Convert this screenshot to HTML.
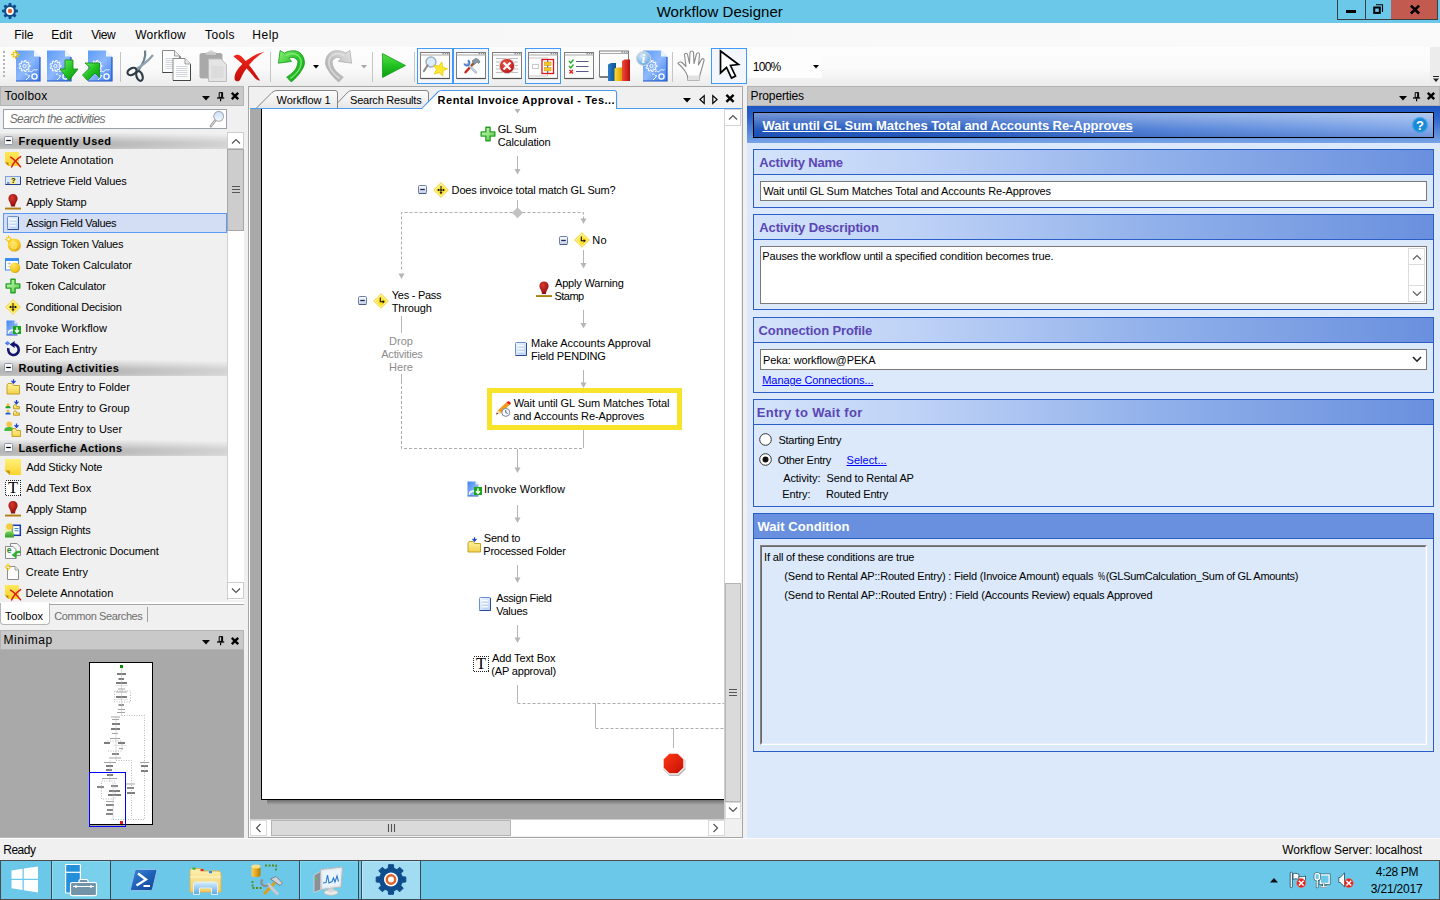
<!DOCTYPE html>
<html lang="en"><head><meta charset="utf-8"><title>Workflow Designer</title><style>
html,body{margin:0;padding:0;}
body{width:1440px;height:900px;overflow:hidden;position:relative;background:#f0f0f0;font-family:"Liberation Sans",sans-serif;font-size:11px;color:#000;}
div,span.t,svg{position:absolute;box-sizing:border-box;}
span.t{white-space:pre;}
svg{overflow:visible;}
</style></head><body>
<div style="left:0px;top:0px;width:1440px;height:23px;background:#6bc8e9;"></div>
<span class="t" style="left:656.70px;top:1.80px;font-size:15px;line-height:20px;letter-spacing:0.030px;">Workflow Designer</span>
<svg style="left:2px;top:3px;" width="16" height="16" viewBox="0 0 16 16"><polygon points="15.90,6.73 15.90,9.27 13.80,9.54 13.21,10.98 14.49,12.68 12.68,14.49 11.01,13.19 9.57,13.79 9.27,15.90 6.73,15.90 6.46,13.80 5.02,13.21 3.32,14.49 1.51,12.68 2.81,11.01 2.21,9.57 0.10,9.27 0.10,6.73 2.20,6.46 2.79,5.02 1.51,3.32 3.32,1.51 4.99,2.81 6.43,2.21 6.73,0.10 9.27,0.10 9.54,2.20 10.98,2.79 12.68,1.51 14.49,3.32 13.19,4.99 13.79,6.43" fill="#0e4c8c"/><circle cx="8" cy="8" r="3.9" fill="#fff"/><circle cx="8" cy="8" r="2.2" fill="#e0632a"/></svg>
<div style="left:1337px;top:0px;width:29px;height:20px;background:#6bc8e9;border:1px solid #3a3f42;border-top:none;"></div>
<div style="left:1365px;top:0px;width:27px;height:20px;background:#6bc8e9;border:1px solid #3a3f42;border-top:none;border-right:none;"></div>
<div style="left:1391px;top:0px;width:47px;height:20px;background:#c35a50;border-bottom:1px solid #3a3f42;border-right:1px solid #3a3f42;"></div>
<div style="left:1346px;top:10px;width:10px;height:3px;background:#000;"></div>
<svg style="left:1372px;top:3px;" width="12" height="12" viewBox="0 0 12 12"><path d="M4 1.700H10.500V9" fill="none" stroke="#000" stroke-width="1.100"/><rect x="2.200" y="4.500" width="5.600" height="5.400" fill="none" stroke="#000" stroke-width="2"/></svg>
<svg style="left:1409.5px;top:4.5px;" width="10" height="9" viewBox="0 0 10 9"><path d="M0.900 0.600L9.100 8.500M9.100 0.600L0.900 8.500" stroke="#000" stroke-width="2.600"/></svg>
<div style="left:0px;top:23px;width:1440px;height:24px;background:linear-gradient(90deg,#f5f5f5 0%,#f7f7f7 20%,#fafafa 100%);"></div>
<span class="t" style="left:14.35px;top:26.84px;font-size:12px;line-height:16px;letter-spacing:-0.054px;">File</span>
<span class="t" style="left:51.35px;top:26.84px;font-size:12px;line-height:16px;letter-spacing:0.019px;">Edit</span>
<span class="t" style="left:91.25px;top:26.84px;font-size:12px;line-height:16px;letter-spacing:-0.426px;">View</span>
<span class="t" style="left:135.25px;top:26.84px;font-size:12px;line-height:16px;letter-spacing:0.200px;">Workflow</span>
<span class="t" style="left:205.05px;top:26.84px;font-size:12px;line-height:16px;letter-spacing:0.384px;">Tools</span>
<span class="t" style="left:252.35px;top:26.84px;font-size:12px;line-height:16px;letter-spacing:0.481px;">Help</span>
<div style="left:0px;top:47px;width:1440px;height:39px;background:linear-gradient(#fdfdfd 0%,#fafafa 55%,#ececec 100%);"></div>
<div style="left:1430px;top:47px;width:10px;height:39px;background:#ececec;"></div>
<svg style="left:1433px;top:76px;" width="6" height="7" viewBox="0 0 6 7"><path d="M0 0.5H6" stroke="#222" stroke-width="1"/><path d="M0 2.5H6L3 6Z" fill="#222"/></svg>
<div style="left:0px;top:86px;width:244px;height:20px;background:#c9c9c9;border:1px solid #b4b4b4;"></div>
<span class="t" style="left:4.45px;top:87.84px;font-size:12px;line-height:16px;letter-spacing:0.248px;">Toolbox</span>
<svg style="left:202.2px;top:95.5px;" width="8" height="5" viewBox="0 0 8 5"><path d="M0 0H8L4 4.5Z" fill="#000"/></svg>
<svg style="left:216.79999999999998px;top:91.6px;" width="8" height="10" viewBox="0 0 8 10"><path d="M2.200 0.600H5.600V5.400H2.200Z" fill="none" stroke="#000" stroke-width="1"/><path d="M4.900 0.600V5.400" stroke="#000" stroke-width="1.500"/><path d="M0 6H7.200" stroke="#000" stroke-width="1.300"/><path d="M3.600 6.500V9.300" stroke="#000" stroke-width="1.200"/></svg>
<svg style="left:231.0px;top:92.0px;" width="8" height="8" viewBox="0 0 8 8"><path d="M0.800 0.800L7.200 7.200M7.200 0.800L0.800 7.200" stroke="#000" stroke-width="2.400"/></svg>
<div style="left:747px;top:86px;width:693px;height:20px;background:#c9c9c9;border:1px solid #b4b4b4;"></div>
<span class="t" style="left:750.55px;top:87.84px;font-size:12px;line-height:16px;letter-spacing:-0.127px;">Properties</span>
<svg style="left:1398.5px;top:95.5px;" width="8" height="5" viewBox="0 0 8 5"><path d="M0 0H8L4 4.5Z" fill="#000"/></svg>
<svg style="left:1413.1000000000001px;top:91.6px;" width="8" height="10" viewBox="0 0 8 10"><path d="M2.200 0.600H5.600V5.400H2.200Z" fill="none" stroke="#000" stroke-width="1"/><path d="M4.900 0.600V5.400" stroke="#000" stroke-width="1.500"/><path d="M0 6H7.200" stroke="#000" stroke-width="1.300"/><path d="M3.600 6.500V9.300" stroke="#000" stroke-width="1.200"/></svg>
<svg style="left:1427.3px;top:92.0px;" width="8" height="8" viewBox="0 0 8 8"><path d="M0.800 0.800L7.200 7.200M7.200 0.800L0.800 7.200" stroke="#000" stroke-width="2.400"/></svg>
<div style="left:0px;top:630px;width:244px;height:20px;background:#c9c9c9;border:1px solid #b4b4b4;"></div>
<span class="t" style="left:3.55px;top:632.14px;font-size:12px;line-height:16px;letter-spacing:0.546px;">Minimap</span>
<svg style="left:202.2px;top:640px;" width="8" height="5" viewBox="0 0 8 5"><path d="M0 0H8L4 4.5Z" fill="#000"/></svg>
<svg style="left:216.79999999999998px;top:636.1px;" width="8" height="10" viewBox="0 0 8 10"><path d="M2.200 0.600H5.600V5.400H2.200Z" fill="none" stroke="#000" stroke-width="1"/><path d="M4.900 0.600V5.400" stroke="#000" stroke-width="1.500"/><path d="M0 6H7.200" stroke="#000" stroke-width="1.300"/><path d="M3.600 6.500V9.300" stroke="#000" stroke-width="1.200"/></svg>
<svg style="left:231.0px;top:636.5px;" width="8" height="8" viewBox="0 0 8 8"><path d="M0.800 0.800L7.200 7.200M7.200 0.800L0.800 7.200" stroke="#000" stroke-width="2.400"/></svg>
<div style="left:0px;top:838px;width:1440px;height:22px;background:#f0f0f0;border-top:1px solid #fcfcfc;"></div>
<span class="t" style="left:3.35px;top:842.24px;font-size:12px;line-height:16px;letter-spacing:-0.534px;">Ready</span>
<span class="t" style="left:1282.35px;top:842.24px;font-size:12px;line-height:16px;letter-spacing:-0.084px;">Workflow Server: localhost</span>
<div style="left:3px;top:51px;width:2px;height:2px;background:#b5b5b5;"></div>
<div style="left:3px;top:55px;width:2px;height:2px;background:#b5b5b5;"></div>
<div style="left:3px;top:59px;width:2px;height:2px;background:#b5b5b5;"></div>
<div style="left:3px;top:63px;width:2px;height:2px;background:#b5b5b5;"></div>
<div style="left:3px;top:67px;width:2px;height:2px;background:#b5b5b5;"></div>
<div style="left:3px;top:71px;width:2px;height:2px;background:#b5b5b5;"></div>
<div style="left:3px;top:75px;width:2px;height:2px;background:#b5b5b5;"></div>
<svg style="left:11px;top:49.5px;" width="32" height="32" viewBox="0 0 32 32"><defs><linearGradient id="wfd1" x1="0" y1="0" x2="1" y2="1"><stop offset="0" stop-color="#5b9bf8"/><stop offset="0.5" stop-color="#8db8fb"/><stop offset="1" stop-color="#3f7fee"/></linearGradient></defs><path d="M5 0.500H23L29 6.5V31H5Z" fill="url(#wfd1)"/><path d="M23 0.500V6.500H29Z" fill="#eef4ff"/><path d="M5 31H29V7" stroke="#1f55c8" stroke-width="1.2" fill="none"/><path d="M19.06 15.32L19.06 16.68L17.41 16.83L17.03 17.88L18.20 19.05L17.32 20.10L15.96 19.15L15.00 19.71L15.14 21.36L13.79 21.59L13.36 20.00L12.26 19.80L11.31 21.15L10.13 20.47L10.82 18.97L10.11 18.12L8.51 18.54L8.04 17.26L9.54 16.56L9.54 15.44L8.04 14.74L8.51 13.46L10.11 13.88L10.82 13.03L10.13 11.53L11.31 10.85L12.26 12.20L13.36 12.00L13.79 10.41L15.14 10.64L15.00 12.29L15.96 12.85L17.32 11.90L18.20 12.95L17.03 14.12L17.41 15.17Z" fill="none" stroke="#fff" stroke-width="1"/><circle cx="13.5" cy="16" r="1.6" fill="none" stroke="#fff" stroke-width="0.9"/><path d="M17 22C19 19 20 24 22 20.5C23.5 18 25 22 26.5 19" stroke="#fff" stroke-width="1" fill="none"/><path d="M14 24.500C16 22.5 17 27 18.5 25.500C18 28 16 28.5 15 30" stroke="#fff" stroke-width="1" fill="none"/><circle cx="23.5" cy="26.5" r="2.6" fill="none" stroke="#fff" stroke-width="1.3"/><path d="M6.00 4.50L9.00 4.50M5.56 5.56L7.20 7.20M4.50 6.00L4.50 9.00M3.44 5.56L1.80 7.20M3.00 4.50L0.00 4.50M3.44 3.44L1.80 1.80M4.50 3.00L4.50 0.00M5.56 3.44L7.20 1.80" stroke="#f2c200" stroke-width="1.3" fill="none"/><circle cx="4.5" cy="4.5" r="1.3" fill="#fff6b0"/></svg>
<svg style="left:46px;top:49.5px;" width="32" height="32" viewBox="0 0 32 32"><defs><linearGradient id="wfd2" x1="0" y1="0" x2="1" y2="1"><stop offset="0" stop-color="#5b9bf8"/><stop offset="0.5" stop-color="#8db8fb"/><stop offset="1" stop-color="#3f7fee"/></linearGradient></defs><path d="M1 0.500H19L25 6.5V31H1Z" fill="url(#wfd2)"/><path d="M19 0.500V6.500H25Z" fill="#eef4ff"/><path d="M1 31H25V7" stroke="#1f55c8" stroke-width="1.2" fill="none"/><path d="M15.06 15.32L15.06 16.68L13.41 16.83L13.03 17.88L14.20 19.05L13.32 20.10L11.96 19.15L11.00 19.71L11.14 21.36L9.79 21.59L9.36 20.00L8.26 19.80L7.31 21.15L6.13 20.47L6.82 18.97L6.11 18.12L4.51 18.54L4.04 17.26L5.54 16.56L5.54 15.44L4.04 14.74L4.51 13.46L6.11 13.88L6.82 13.03L6.13 11.53L7.31 10.85L8.26 12.20L9.36 12.00L9.79 10.41L11.14 10.64L11.00 12.29L11.96 12.85L13.32 11.90L14.20 12.95L13.03 14.12L13.41 15.17Z" fill="none" stroke="#fff" stroke-width="1"/><circle cx="9.5" cy="16" r="1.6" fill="none" stroke="#fff" stroke-width="0.9"/><path d="M13 22C15 19 16 24 18 20.5C19.5 18 21 22 22.5 19" stroke="#fff" stroke-width="1" fill="none"/><path d="M10 24.500C12 22.5 13 27 14.5 25.500C14 28 12 28.5 11 30" stroke="#fff" stroke-width="1" fill="none"/><circle cx="19.5" cy="26.5" r="2.6" fill="none" stroke="#fff" stroke-width="1.3"/><defs><linearGradient id="grn1" x1="0" y1="0" x2="1" y2="1"><stop offset="0" stop-color="#7df06a"/><stop offset="0.5" stop-color="#22c322"/><stop offset="1" stop-color="#0a8f10"/></linearGradient></defs><path d="M19 10H27V19H32L23 30.500L14 19H19Z" fill="url(#grn1)" stroke="#0f8a12" stroke-width="0.8" stroke-linejoin="round"/></svg>
<svg style="left:82px;top:49.5px;" width="32" height="32" viewBox="0 0 32 32"><defs><linearGradient id="wfd3" x1="0" y1="0" x2="1" y2="1"><stop offset="0" stop-color="#5b9bf8"/><stop offset="0.5" stop-color="#8db8fb"/><stop offset="1" stop-color="#3f7fee"/></linearGradient></defs><path d="M6 0.500H24L30 6.5V31H6Z" fill="url(#wfd3)"/><path d="M24 0.500V6.500H30Z" fill="#eef4ff"/><path d="M6 31H30V7" stroke="#1f55c8" stroke-width="1.2" fill="none"/><path d="M20.06 15.32L20.06 16.68L18.41 16.83L18.03 17.88L19.20 19.05L18.32 20.10L16.96 19.15L16.00 19.71L16.14 21.36L14.79 21.59L14.36 20.00L13.26 19.80L12.31 21.15L11.13 20.47L11.82 18.97L11.11 18.12L9.51 18.54L9.04 17.26L10.54 16.56L10.54 15.44L9.04 14.74L9.51 13.46L11.11 13.88L11.82 13.03L11.13 11.53L12.31 10.85L13.26 12.20L14.36 12.00L14.79 10.41L16.14 10.64L16.00 12.29L16.96 12.85L18.32 11.90L19.20 12.95L18.03 14.12L18.41 15.17Z" fill="none" stroke="#fff" stroke-width="1"/><circle cx="14.5" cy="16" r="1.6" fill="none" stroke="#fff" stroke-width="0.9"/><path d="M18 22C20 19 21 24 23 20.5C24.5 18 26 22 27.5 19" stroke="#fff" stroke-width="1" fill="none"/><path d="M15 24.500C17 22.5 18 27 19.5 25.500C19 28 17 28.5 16 30" stroke="#fff" stroke-width="1" fill="none"/><circle cx="24.5" cy="26.5" r="2.6" fill="none" stroke="#fff" stroke-width="1.3"/><defs><linearGradient id="grn" x1="0" y1="0" x2="1" y2="1"><stop offset="0" stop-color="#7df06a"/><stop offset="0.5" stop-color="#22c322"/><stop offset="1" stop-color="#0a8f10"/></linearGradient></defs><path d="M3 13H17.500V27.500L13 23L5.5 30.500L0.500 25L8 17.500Z" fill="url(#grn)" stroke="#0f8a12" stroke-width="0.8" stroke-linejoin="round"/></svg>
<div style="left:120px;top:52px;width:1px;height:30px;background:#c5c5c5;"></div>
<svg style="left:126px;top:50px;" width="28" height="32" viewBox="0 0 28 32"><path d="M19 0.500C20 6 17 14 12.5 20" stroke="#6d7f8d" stroke-width="2.2" fill="none"/><path d="M27 5C23 10 17 15 10.500 19" stroke="#8fa0ae" stroke-width="2.200" fill="none"/><ellipse cx="6" cy="21.5" rx="4.800" ry="3.200" transform="rotate(-28 6 21.5)" fill="none" stroke="#2f3b45" stroke-width="2.2"/><ellipse cx="13.5" cy="26" rx="3" ry="5" transform="rotate(-18 13.5 26)" fill="none" stroke="#2f3b45" stroke-width="2.2"/></svg>
<svg style="left:162px;top:50px;" width="30" height="32" viewBox="0 0 30 32"><path d="M0.5 0.5H12.5L18.0 6.0V22.5H0.5Z" fill="#fcfcfc" stroke="#8a8a8a"/><path d="M12.5 0.5V6.0H18.0" fill="#e9e9e9" stroke="#8a8a8a" stroke-width="0.8"/><path d="M3.5 8.5H15.0" stroke="#c9ccd6" stroke-width="0.8"/><path d="M3.5 10.5H15.0" stroke="#c9ccd6" stroke-width="0.8"/><path d="M3.5 12.5H15.0" stroke="#c9ccd6" stroke-width="0.8"/><path d="M3.5 14.5H15.0" stroke="#c9ccd6" stroke-width="0.8"/><path d="M3.5 16.5H15.0" stroke="#c9ccd6" stroke-width="0.8"/><path d="M3.5 18.5H15.0" stroke="#c9ccd6" stroke-width="0.8"/><path d="M0.5 22.5H18.0V6.5" stroke="#444" stroke-width="1" fill="none"/><path d="M11 8.5H23L28.5 14.0V30.5H11Z" fill="#fcfcfc" stroke="#8a8a8a"/><path d="M23 8.5V14.0H28.5" fill="#e9e9e9" stroke="#8a8a8a" stroke-width="0.8"/><path d="M14 16.5H25.5" stroke="#c9ccd6" stroke-width="0.8"/><path d="M14 18.5H25.5" stroke="#c9ccd6" stroke-width="0.8"/><path d="M14 20.5H25.5" stroke="#c9ccd6" stroke-width="0.8"/><path d="M14 22.5H25.5" stroke="#c9ccd6" stroke-width="0.8"/><path d="M14 24.5H25.5" stroke="#c9ccd6" stroke-width="0.8"/><path d="M14 26.5H25.5" stroke="#c9ccd6" stroke-width="0.8"/><path d="M11 30.5H28.5V14.5" stroke="#444" stroke-width="1" fill="none"/></svg>
<svg style="left:199px;top:50px;" width="28" height="32" viewBox="0 0 28 32"><rect x="0.500" y="3" width="23" height="25.500" rx="2.5" fill="#a9a9a9"/><path d="M7 3L12 0L17 3Z" fill="#d5d5d5"/><rect x="7" y="2.5" width="10" height="2.500" fill="#c8c8c8"/><path d="M9.5 9H22L27.500 14.500V31.500H9.500Z" fill="#e4e4e4" stroke="#bdbdbd"/><path d="M12.500 17H24.500" stroke="#cfcfcf" stroke-width="0.8"/><path d="M12.500 19H24.500" stroke="#cfcfcf" stroke-width="0.8"/><path d="M12.500 21H24.500" stroke="#cfcfcf" stroke-width="0.8"/><path d="M12.500 23H24.500" stroke="#cfcfcf" stroke-width="0.8"/><path d="M12.500 25H24.500" stroke="#cfcfcf" stroke-width="0.8"/><path d="M12.500 27H24.500" stroke="#cfcfcf" stroke-width="0.8"/></svg>
<svg style="left:233px;top:51px;" width="32" height="31" viewBox="0 0 32 31"><defs><linearGradient id="rdx" x1="0" y1="0" x2="0" y2="1"><stop offset="0" stop-color="#f0281c"/><stop offset="1" stop-color="#c40d08"/></linearGradient></defs><path d="M0.500 5.500C2.500 3 6 3 8.500 5.500C14.500 11.500 21.500 20.500 27 29.500C25 29.800 23 28.500 21 26C15.500 19 8 11 0.500 5.500Z" fill="url(#rdx)"/><path d="M31.500 1C24 4.500 13.500 14.500 7.500 28C6.500 30.800 3 31 1.800 28.800C1 26 2 22.500 4 19.500C10 10 22 2.500 31.500 1Z" fill="url(#rdx)"/></svg>
<div style="left:270px;top:52px;width:1px;height:30px;background:#c5c5c5;"></div>
<svg style="left:277.5px;top:49.5px;" width="27" height="32" viewBox="0 0 27 32"><defs><linearGradient id="und" x1="0" y1="0" x2="1" y2="1"><stop offset="0" stop-color="#8af078"/><stop offset="0.5" stop-color="#2cc32c"/><stop offset="1" stop-color="#0e9a14"/></linearGradient></defs><path d="M2.1 0.500L0.400 13.2L13.600 11.400L10.800 8C13 7.200 15.500 7.200 16.700 8C19 9.500 20.300 11 19.800 12.800C19.500 15.500 18.500 17.500 17.400 19.400C15 22.500 12 24.800 8.700 27.100L13.250 31.900C17.500 28.500 21.500 24.500 23.700 20.100C25.800 17 26.800 14 26.400 11.400C26 8 24.500 5 22.300 3.100C20 1.200 17.500 0.700 15.300 0.700C12 0.700 9 1.500 6.300 3.100Z" fill="url(#und)" stroke="#159a18" stroke-width="0.8" stroke-linejoin="round"/><path d="M8 5.500C12 3.300 17 3.300 20 5.500C23.500 8.500 24 13 22 18C20 22 16.500 25.500 12.500 28.500" fill="none" stroke="#8af078" stroke-width="1.600" opacity="0.750"/></svg>
<svg style="left:312.5px;top:65px;" width="6" height="4" viewBox="0 0 6 4"><path d="M0 0H6L3 3.500Z" fill="#000"/></svg>
<svg style="left:325px;top:49.5px;" width="27" height="32" viewBox="0 0 27 32"><g transform="translate(27 0) scale(-1 1)"><defs><linearGradient id="red" x1="0" y1="0" x2="1" y2="1"><stop offset="0" stop-color="#e4e4e4"/><stop offset="0.5" stop-color="#c2c2c2"/><stop offset="1" stop-color="#a8a8a8"/></linearGradient></defs><path d="M2.1 0.500L0.400 13.2L13.600 11.400L10.800 8C13 7.200 15.500 7.200 16.700 8C19 9.500 20.300 11 19.800 12.800C19.500 15.500 18.500 17.500 17.400 19.400C15 22.500 12 24.800 8.700 27.100L13.250 31.900C17.500 28.500 21.500 24.500 23.700 20.100C25.800 17 26.800 14 26.400 11.400C26 8 24.500 5 22.300 3.100C20 1.200 17.500 0.700 15.300 0.700C12 0.700 9 1.500 6.300 3.100Z" fill="url(#red)" stroke="#b0b0b0" stroke-width="0.8" stroke-linejoin="round"/><path d="M8 5.500C12 3.300 17 3.300 20 5.500C23.500 8.500 24 13 22 18C20 22 16.500 25.500 12.500 28.500" fill="none" stroke="#e4e4e4" stroke-width="1.600" opacity="0.750"/></g></svg>
<svg style="left:360.5px;top:65px;" width="6" height="4" viewBox="0 0 6 4"><path d="M0 0H6L3 3.500Z" fill="#a9a9a9"/></svg>
<div style="left:372px;top:52px;width:1px;height:30px;background:#c5c5c5;"></div>
<svg style="left:381.5px;top:53px;" width="24" height="25" viewBox="0 0 24 25"><defs><linearGradient id="ply" x1="0" y1="0" x2="0" y2="1"><stop offset="0" stop-color="#5be04a"/><stop offset="0.5" stop-color="#22c322"/><stop offset="1" stop-color="#0c9a12"/></linearGradient></defs><path d="M0.500 0.500L23.500 12.500L0.500 24.500Z" fill="url(#ply)" stroke="#14a018" stroke-width="0.800" stroke-linejoin="round"/></svg>
<div style="left:414px;top:52px;width:1px;height:30px;background:#c5c5c5;"></div>
<div style="left:417px;top:48px;width:36px;height:36px;background:#f3f7fd;border:1px solid #3f9bf7;"></div>
<svg style="left:420px;top:50px;" width="30" height="30" viewBox="0 0 30 30"><rect x="0.5" y="2.5" width="29" height="26" fill="#fdfdfd" stroke="#7d7d7d" stroke-width="1"/><path d="M0.5 5.0H29.5" stroke="#a9a9a9" stroke-width="1"/><path d="M22.5 3.7H24.0M24.8 3.7H26.3M27.0 3.7H28.5" stroke="#555" stroke-width="0.8"/><path d="M1.0 28.5H29.5" stroke="#555" stroke-width="1.2"/><circle cx="11" cy="12" r="5" fill="#dcecfb" stroke="#9ab0c5" stroke-width="1.4"/><path d="M7.500 15.500L4 21" stroke="#8e8e8e" stroke-width="2.200" stroke-linecap="round"/><path d="M21.86 11.93L22.62 17.03L27.48 18.72L22.87 21.02L22.77 26.17L19.16 22.49L14.23 23.99L16.61 19.42L13.66 15.19L18.74 16.04Z" fill="#ffe92e" stroke="#e6c200" stroke-width="0.7"/></svg>
<div style="left:453px;top:48px;width:36px;height:36px;background:#f3f7fd;border:1px solid #3f9bf7;"></div>
<svg style="left:456px;top:50px;" width="30" height="30" viewBox="0 0 30 30"><rect x="0.5" y="2.5" width="29" height="26" fill="#fdfdfd" stroke="#7d7d7d" stroke-width="1"/><path d="M0.5 5.0H29.5" stroke="#a9a9a9" stroke-width="1"/><path d="M22.5 3.7H24.0M24.8 3.7H26.3M27.0 3.7H28.5" stroke="#555" stroke-width="0.8"/><path d="M1.0 28.5H29.5" stroke="#555" stroke-width="1.2"/><path d="M9.500 22.300L17 14" stroke="#c8281e" stroke-width="2.400" stroke-linecap="round"/><path d="M15.500 15.500L18.500 12.200" stroke="#8a6a2a" stroke-width="2.200"/><path d="M16 11L19.500 8.500C21 8.300 23 9.500 24 12L22.500 13.500L21 12L18.500 14.500Z" fill="#8a96a2" stroke="#5a6672" stroke-width="0.600"/><path d="M20 22.300L11.500 14" stroke="#aab4c0" stroke-width="2.400" stroke-linecap="round"/><path d="M20 22.300L11.500 14" stroke="#e8eef4" stroke-width="0.800"/><path d="M8.300 13.500A2.600 2.600 0 1 0 11.800 10.500" stroke="#4a7ad0" stroke-width="1.900" fill="none"/></svg>
<svg style="left:492px;top:50px;" width="30" height="30" viewBox="0 0 30 30"><rect x="0.5" y="2.5" width="29" height="26" fill="#fdfdfd" stroke="#7d7d7d" stroke-width="1"/><path d="M0.5 5.0H29.5" stroke="#a9a9a9" stroke-width="1"/><path d="M22.5 3.7H24.0M24.8 3.7H26.3M27.0 3.7H28.5" stroke="#555" stroke-width="0.8"/><path d="M1.0 28.5H29.5" stroke="#555" stroke-width="1.2"/><path d="M4 8.5H26" stroke="#bdbdbd" stroke-width="1"/><path d="M4 12.0H26" stroke="#bdbdbd" stroke-width="1"/><path d="M4 15.5H26" stroke="#bdbdbd" stroke-width="1"/><path d="M4 19.0H26" stroke="#bdbdbd" stroke-width="1"/><path d="M4 22.5H26" stroke="#bdbdbd" stroke-width="1"/><defs><radialGradient id="errg" cx="0.4" cy="0.35" r="0.7"><stop offset="0" stop-color="#f05a4a"/><stop offset="1" stop-color="#b31212"/></radialGradient></defs><circle cx="15" cy="16" r="7.600" fill="url(#errg)" stroke="#d9d9d9" stroke-width="1"/><path d="M11.500 12.500L18.500 19.500M18.500 12.500L11.500 19.500" stroke="#fff" stroke-width="2.2"/></svg>
<div style="left:525px;top:48px;width:36px;height:36px;background:#f3f7fd;border:1px solid #3f9bf7;"></div>
<svg style="left:528px;top:50px;" width="30" height="30" viewBox="0 0 30 30"><rect x="0.5" y="2.5" width="29" height="26" fill="#fdfdfd" stroke="#7d7d7d" stroke-width="1"/><path d="M0.5 5.0H29.5" stroke="#a9a9a9" stroke-width="1"/><path d="M22.5 3.7H24.0M24.8 3.7H26.3M27.0 3.7H28.5" stroke="#555" stroke-width="0.8"/><path d="M1.0 28.5H29.5" stroke="#555" stroke-width="1.2"/><path d="M1 8H19.500V26H1" fill="none" stroke="#c9c9c9" stroke-width="1"/><rect x="4.500" y="14.500" width="6" height="4" fill="#fff" stroke="#c9c9c9"/><rect x="14" y="9.500" width="11.500" height="14" fill="#fff" stroke="#e0161a" stroke-width="1.300"/><path d="M19.700 10V23" stroke="#1a3fd0" stroke-width="1"/><rect x="16.500" y="12" width="6.500" height="3.400" fill="#f7c62a" stroke="#c99a0a" stroke-width="0.6"/><rect x="16.500" y="17.500" width="6.500" height="3.400" fill="#f7c62a" stroke="#c99a0a" stroke-width="0.6"/></svg>
<svg style="left:564px;top:50px;" width="30" height="30" viewBox="0 0 30 30"><rect x="0.5" y="2.5" width="29" height="26" fill="#fdfdfd" stroke="#7d7d7d" stroke-width="1"/><path d="M0.5 5.0H29.5" stroke="#a9a9a9" stroke-width="1"/><path d="M22.5 3.7H24.0M24.8 3.7H26.3M27.0 3.7H28.5" stroke="#555" stroke-width="0.8"/><path d="M1.0 28.5H29.5" stroke="#555" stroke-width="1.2"/><path d="M5 11L6.800 13L9.500 9.500" stroke="#1fb01f" stroke-width="1.400" fill="none"/><path d="M5 16L6.800 18L9.500 14.500" stroke="#1fb01f" stroke-width="1.400" fill="none"/><path d="M5.500 20L9 23.500M9 20L5.500 23.500" stroke="#e01a1a" stroke-width="1.400"/><path d="M12 11.500H24.500M12 16.500H24.500M12 21.500H24.500" stroke="#5a5a8a" stroke-width="1"/></svg>
<svg style="left:599px;top:48.5px;" width="32" height="33" viewBox="0 0 32 33"><rect x="0.5" y="2" width="29" height="26" fill="#fdfdfd" stroke="#7d7d7d" stroke-width="1"/><path d="M0.5 4.5H29.5" stroke="#a9a9a9" stroke-width="1"/><path d="M22.5 3.2H24.0M24.8 3.2H26.3M27.0 3.2H28.5" stroke="#555" stroke-width="0.8"/><path d="M1.0 28H29.5" stroke="#555" stroke-width="1.2"/><defs><linearGradient id="cb1" x1="0" x2="1"><stop offset="0" stop-color="#2a7fc8"/><stop offset="1" stop-color="#0d4f8f"/></linearGradient><linearGradient id="cb2" x1="0" x2="1"><stop offset="0" stop-color="#ffd83a"/><stop offset="1" stop-color="#d9a400"/></linearGradient><linearGradient id="cb3" x1="0" x2="1"><stop offset="0" stop-color="#f04a3a"/><stop offset="1" stop-color="#b80d0d"/></linearGradient></defs><path d="M9 15.500L12 14H17V32H9Z" fill="url(#cb1)"/><path d="M15.500 19.500L18 18.500H23V32H15.500Z" fill="url(#cb2)"/><path d="M23 12L25.500 10.500H31V32H23Z" fill="url(#cb3)"/></svg>
<svg style="left:636px;top:49.5px;" width="32" height="32" viewBox="0 0 32 32"><defs><linearGradient id="wfd4" x1="0" y1="0" x2="1" y2="1"><stop offset="0" stop-color="#5b9bf8"/><stop offset="0.5" stop-color="#8db8fb"/><stop offset="1" stop-color="#3f7fee"/></linearGradient></defs><path d="M7 0.500H25L31 6.5V31H7Z" fill="url(#wfd4)"/><path d="M25 0.500V6.500H31Z" fill="#eef4ff"/><path d="M7 31H31V7" stroke="#1f55c8" stroke-width="1.2" fill="none"/><path d="M21.06 15.32L21.06 16.68L19.41 16.83L19.03 17.88L20.20 19.05L19.32 20.10L17.96 19.15L17.00 19.71L17.14 21.36L15.79 21.59L15.36 20.00L14.26 19.80L13.31 21.15L12.13 20.47L12.82 18.97L12.11 18.12L10.51 18.54L10.04 17.26L11.54 16.56L11.54 15.44L10.04 14.74L10.51 13.46L12.11 13.88L12.82 13.03L12.13 11.53L13.31 10.85L14.26 12.20L15.36 12.00L15.79 10.41L17.14 10.64L17.00 12.29L17.96 12.85L19.32 11.90L20.20 12.95L19.03 14.12L19.41 15.17Z" fill="none" stroke="#fff" stroke-width="1"/><circle cx="15.5" cy="16" r="1.6" fill="none" stroke="#fff" stroke-width="0.9"/><path d="M19 22C21 19 22 24 24 20.5C25.5 18 27 22 28.5 19" stroke="#fff" stroke-width="1" fill="none"/><path d="M16 24.500C18 22.5 19 27 20.5 25.500C20 28 18 28.5 17 30" stroke="#fff" stroke-width="1" fill="none"/><circle cx="25.5" cy="26.5" r="2.6" fill="none" stroke="#fff" stroke-width="1.3"/><defs><radialGradient id="inf" cx="0.4" cy="0.3" r="0.8"><stop offset="0" stop-color="#d8ecfb"/><stop offset="1" stop-color="#5aa0e0"/></radialGradient></defs><circle cx="7.500" cy="8.500" r="7" fill="url(#inf)" stroke="#d9d9d9" stroke-width="1"/><text x="7.500" y="13" font-size="12" font-style="italic" font-weight="bold" text-anchor="middle" font-family="Liberation Serif,serif" fill="#fff">i</text></svg>
<div style="left:672px;top:52px;width:1px;height:30px;background:#c5c5c5;"></div>
<svg style="left:677px;top:49.5px;" width="30" height="32" viewBox="0 0 30 32"><path d="M8 21C5 17 2.500 14.500 1 13.500C1.500 11.500 4 11.500 5.500 13L9 16.500L7.500 5C7.500 3 10 2.500 10.500 4.500L12.500 13.500L13 2.500C13.500 0.500 16 0.500 16.500 2.500L17 13.500L19.500 4C20.500 2 22.500 2.500 22.500 4.500L21.500 15L24.500 9.500C25.500 8 27.500 8.500 27 10.500C25.500 15.500 24.500 20 23 24.500L22 30.500H11L10.500 26C10 24.500 9 22.500 8 21Z" fill="#fff" stroke="#8a8a8a" stroke-width="1.100" stroke-linejoin="round"/><path d="M11 25.500H22.500V30.500H11Z" fill="#e2e2e2"/></svg>
<div style="left:711px;top:48px;width:36px;height:36px;background:#f3f7fd;border:1px solid #3f9bf7;"></div>
<svg style="left:719px;top:50px;" width="22" height="30" viewBox="0 0 22 30"><path d="M1.500 1L19.500 14.500L11.500 15.500L16.500 26L12.500 28L7.500 17.500L1.500 23Z" fill="#fff" stroke="#000" stroke-width="1.700" stroke-linejoin="miter"/></svg>
<div style="left:748px;top:55px;width:74px;height:23px;background:#fdfdfd;"></div>
<span class="t" style="left:752.80px;top:58.64px;font-size:12px;line-height:16px;letter-spacing:-0.757px;">100%</span>
<svg style="left:812.5px;top:65px;" width="6" height="4" viewBox="0 0 6 4"><path d="M0 0H6L3 3.500Z" fill="#000"/></svg>
<div style="left:0px;top:106px;width:244px;height:498px;background:#f0f0f0;"></div>
<div style="left:3px;top:109px;width:224px;height:20px;background:#fff;border:1px solid #9aa0a8;"></div>
<span class="t" style="left:9.70px;top:110.64px;font-size:12px;line-height:16px;letter-spacing:-0.579px;font-style:italic;color:#707070;">Search the activities</span>
<svg style="left:209px;top:110px;" width="16" height="18" viewBox="0 0 16 18"><defs><linearGradient id="mag" x1="0" y1="0" x2="0" y2="1"><stop offset="0" stop-color="#c9e0f8"/><stop offset="1" stop-color="#f4f9fe"/></linearGradient></defs><path d="M6.300 10.300L1.800 16.300" stroke="#9a9a9a" stroke-width="2.400" stroke-linecap="round"/><path d="M6.300 10.300L1.800 16.300" stroke="#f0f0f0" stroke-width="0.800"/><circle cx="9.700" cy="6.300" r="4.900" fill="url(#mag)" stroke="#a9adb3" stroke-width="1.100"/></svg>
<div style="left:0px;top:133px;width:227px;height:16px;background:linear-gradient(90deg,rgba(255,255,255,0) 0%,rgba(255,255,255,0) 45%,rgba(255,255,255,0.4) 100%),linear-gradient(#ebebeb 0%,#d2d2d2 28%,#b8b8b8 58%,#b6b6b6 80%,#c4c4c4 100%);"></div>
<svg style="left:4px;top:136px;" width="9" height="9" viewBox="0 0 9 9"><rect x="0.5" y="0.5" width="8" height="8" rx="1" fill="#fbfbfb" stroke="#8e9aac"/><path d="M2.2 4.5H6.8" stroke="#000" stroke-width="1.2"/></svg>
<span class="t" style="left:18.50px;top:133.89px;font-size:11px;line-height:14px;letter-spacing:0.452px;font-weight:bold;">Frequently Used</span>
<svg style="left:5px;top:152px;" width="16" height="16" viewBox="0 0 16 16"><defs><linearGradient id="g29" x1="0" y1="0" x2="0" y2="1"><stop offset="0" stop-color="#ffe95c"/><stop offset="1" stop-color="#fbd02a"/></linearGradient></defs><path d="M0 0H14V14H3.5L0 10.5Z" fill="url(#g29)"/><path d="M0 10.5H3.5V14Z" fill="#b8860b"/><path d="M5.5 5.2C8 6.5 11.5 10 15.5 14.8" stroke="#e21b12" stroke-width="1.5" fill="none" stroke-linecap="round"/><path d="M15.6 4.6C12 7 8.5 10.5 6.6 15" stroke="#e21b12" stroke-width="1.5" fill="none" stroke-linecap="round"/></svg>
<span class="t" style="left:25.40px;top:153.19px;font-size:11px;line-height:14px;letter-spacing:0.070px;">Delete Annotation</span>
<svg style="left:5px;top:173px;" width="16" height="16" viewBox="0 0 16 16"><rect x="0.5" y="3.5" width="15" height="8" fill="#dbe8fb" stroke="#7f9fd6"/><path d="M0.5 11.5H15.5V4" stroke="#27408b" fill="none"/><rect x="6" y="4.5" width="4.5" height="6.5" fill="#fff36b"/><path d="M2 10H4.5" stroke="#27408b"/><text x="8.2" y="10.2" font-size="7.5" font-weight="bold" text-anchor="middle" font-family="Liberation Sans,sans-serif" fill="#111">?</text></svg>
<span class="t" style="left:25.40px;top:174.19px;font-size:11px;line-height:14px;letter-spacing:-0.124px;">Retrieve Field Values</span>
<svg style="left:5px;top:194px;" width="16" height="16" viewBox="0 0 16 16"><defs><radialGradient id="g30" cx="0.4" cy="0.3" r="0.7"><stop offset="0" stop-color="#d8382c"/><stop offset="1" stop-color="#8e0d0d"/></radialGradient></defs><path d="M8 0C10.8 0 12.6 2 12.6 4.4C12.6 7 10.2 8.6 10 12.6H6C5.8 8.6 3.4 7 3.4 4.4C3.4 2 5.2 0 8 0Z" fill="url(#g30)"/><rect x="0" y="13.6" width="16" height="1.9" fill="#b07d12"/></svg>
<span class="t" style="left:26.30px;top:195.19px;font-size:11px;line-height:14px;letter-spacing:-0.195px;">Apply Stamp</span>
<div style="left:3px;top:213px;width:224px;height:20px;background:#d3def4;border:1px solid #5a9af5;"></div>
<svg style="left:5px;top:215px;" width="16" height="16" viewBox="0 0 16 16"><defs><linearGradient id="g31" x1="0" y1="0" x2="1" y2="1"><stop offset="0" stop-color="#f2f7ff"/><stop offset="1" stop-color="#b9d3f7"/></linearGradient></defs><rect x="2.5" y="1.5" width="11" height="13" rx="1" fill="url(#g31)" stroke="#6d8fca"/><path d="M2.5 14.5H13.5V2" stroke="#2b4a8f" fill="none"/><path d="M5 5H11M5 8H11M5 11H11" stroke="#fff" stroke-width="1.4"/><path d="M5 6H11M5 9H11M5 12H11" stroke="#9db9e6" stroke-width="0.6"/></svg>
<span class="t" style="left:26.30px;top:216.19px;font-size:11px;line-height:14px;letter-spacing:-0.308px;">Assign Field Values</span>
<svg style="left:5px;top:236px;" width="16" height="16" viewBox="0 0 16 16"><defs><radialGradient id="g32" cx="0.35" cy="0.3" r="0.8"><stop offset="0" stop-color="#ffe763"/><stop offset="0.7" stop-color="#f2c41d"/><stop offset="1" stop-color="#c99708"/></radialGradient></defs><circle cx="9.3" cy="9" r="6.6" fill="url(#g32)"/><path d="M7 7H11V12H7V9.5H9.5" stroke="#ffe98a" stroke-width="1" fill="none" opacity="0.9"/><path d="M4.80 3.20L7.40 3.20M4.45 4.05L5.75 5.35M3.60 4.40L3.60 7.00M2.75 4.05L1.45 5.35M2.40 3.20L-0.20 3.20M2.75 2.35L1.45 1.05M3.60 2.00L3.60 -0.60M4.45 2.35L5.75 1.05" stroke="#f5c400" stroke-width="1.1" fill="none"/><circle cx="3.6" cy="3.2" r="1" fill="#fff8c0"/></svg>
<span class="t" style="left:26.30px;top:237.19px;font-size:11px;line-height:14px;letter-spacing:-0.219px;">Assign Token Values</span>
<svg style="left:5px;top:257px;" width="16" height="16" viewBox="0 0 16 16"><rect x="0.5" y="1.5" width="13" height="11.5" fill="#fff" stroke="#3a8ef0"/><rect x="1" y="2" width="12" height="2" fill="#3a8ef0"/><path d="M2.5 6.5H6M4.2 5V8M8 6.5H11M2.5 9.5H5" stroke="#bbb" stroke-width="0.8"/><defs><radialGradient id="g33" cx="0.35" cy="0.3" r="0.8"><stop offset="0" stop-color="#ffe763"/><stop offset="0.7" stop-color="#f2c41d"/><stop offset="1" stop-color="#c99708"/></radialGradient></defs><circle cx="10" cy="10.7" r="5.2" fill="url(#g33)"/></svg>
<span class="t" style="left:25.40px;top:258.19px;font-size:11px;line-height:14px;letter-spacing:-0.073px;">Date Token Calculator</span>
<svg style="left:5px;top:278px;" width="16" height="16" viewBox="0 0 16 16"><defs><linearGradient id="g34" x1="0" y1="0" x2="1" y2="1"><stop offset="0" stop-color="#d2f7c6"/><stop offset="0.55" stop-color="#8fe27e"/><stop offset="1" stop-color="#4cc43e"/></linearGradient></defs><path d="M5.9 1.2H10.1V5.9H14.8V10.1H10.1V14.8H5.9V10.1H1.2V5.9H5.9Z" fill="url(#g34)" stroke="#27a227" stroke-width="1.4" stroke-linejoin="round"/></svg>
<span class="t" style="left:26.10px;top:279.19px;font-size:11px;line-height:14px;letter-spacing:-0.138px;">Token Calculator</span>
<svg style="left:5px;top:299px;" width="16" height="16" viewBox="0 0 16 16"><defs><linearGradient id="g35" x1="0" y1="0" x2="1" y2="1"><stop offset="0" stop-color="#fff06a"/><stop offset="1" stop-color="#ffd500"/></linearGradient></defs><path d="M8 0.200L15.800 8L8 15.800L0.200 8Z" fill="#f5cf1e"/><path d="M8 1.300L14.700 8L8 14.700L1.300 8Z" fill="#fffbd0"/><path d="M8 2.300L13.700 8L8 13.700L2.300 8Z" fill="url(#g35)"/><path d="M8 4V11M4.800 8H11.200" stroke="#111" stroke-width="1" fill="none"/><path d="M6.600 10.200H9.400L8 12.200ZM6 6.800V9.200L4.200 8ZM10 6.800V9.200L11.800 8Z" fill="#111"/></svg>
<span class="t" style="left:25.75px;top:300.19px;font-size:11px;line-height:14px;letter-spacing:-0.219px;">Conditional Decision</span>
<svg style="left:5px;top:320px;" width="16" height="16" viewBox="0 0 16 16"><defs><linearGradient id="g36" x1="0" y1="0" x2="1" y2="1"><stop offset="0" stop-color="#3f83f0"/><stop offset="1" stop-color="#b8d2fb"/></linearGradient></defs><path d="M1.5 0.5H9.5L12.5 3.5V15H1.5Z" fill="url(#g36)"/><path d="M9.5 0.5V3.5H12.5Z" fill="#e8f0ff"/><path d="M1.5 15H12.5" stroke="#2f5fd0" stroke-width="1"/><path d="M4 13.5C3 12 4 10.5 5.5 10.8C6 9.5 8 9.5 8.3 11" stroke="#fff" stroke-width="1.4" fill="none"/><rect x="8" y="6" width="8" height="8" fill="#1aa51a"/><path d="M12 7.2V12M10 10.3L12 12.5L14 10.3" stroke="#fff" stroke-width="1.4" fill="none"/></svg>
<span class="t" style="left:25.30px;top:321.19px;font-size:11px;line-height:14px;letter-spacing:0.082px;">Invoke Workflow</span>
<svg style="left:5px;top:341px;" width="16" height="16" viewBox="0 0 16 16"><path d="M8.3 3.4A5.3 5.3 0 1 1 3.4 7.2" fill="none" stroke="#14146e" stroke-width="2.6"/><path d="M9.6 0L4.6 3.4L9.6 7Z" fill="#14146e"/><path d="M2.5 0.4L4.8 2.2L2.5 4L0.2 2.2Z" fill="#4a8af0" stroke="#1d55c8" stroke-width="0.5"/></svg>
<span class="t" style="left:25.40px;top:342.19px;font-size:11px;line-height:14px;letter-spacing:-0.135px;">For Each Entry</span>
<div style="left:0px;top:360px;width:227px;height:16px;background:linear-gradient(90deg,rgba(255,255,255,0) 0%,rgba(255,255,255,0) 45%,rgba(255,255,255,0.4) 100%),linear-gradient(#ebebeb 0%,#d2d2d2 28%,#b8b8b8 58%,#b6b6b6 80%,#c4c4c4 100%);"></div>
<svg style="left:4px;top:363px;" width="9" height="9" viewBox="0 0 9 9"><rect x="0.5" y="0.5" width="8" height="8" rx="1" fill="#fbfbfb" stroke="#8e9aac"/><path d="M2.2 4.5H6.8" stroke="#000" stroke-width="1.2"/></svg>
<span class="t" style="left:18.50px;top:360.89px;font-size:11px;line-height:14px;letter-spacing:0.424px;font-weight:bold;">Routing Activities</span>
<svg style="left:5px;top:379px;" width="16" height="16" viewBox="0 0 16 16"><defs><linearGradient id="g37" x1="0" y1="0" x2="0" y2="1"><stop offset="0" stop-color="#fff3a0"/><stop offset="1" stop-color="#f2d24a"/></linearGradient></defs><path d="M2 15.0V6.0L3 4.5H7.25L8.5 6.5H14.5V15.0Z" fill="url(#g37)" stroke="#c09a1a" stroke-width="0.9" stroke-linejoin="round"/><path d="M8.5 0.3V3.6999999999999997M6.5 1.9000000000000001L8.5 4.1L10.5 1.9000000000000001" stroke="#1a3fd0" stroke-width="1.2" fill="none"/></svg>
<span class="t" style="left:25.40px;top:380.19px;font-size:11px;line-height:14px;letter-spacing:-0.004px;">Route Entry to Folder</span>
<svg style="left:5px;top:400px;" width="16" height="16" viewBox="0 0 16 16"><circle cx="3" cy="4.7" r="1.5" fill="#f0c030"/><path d="M0.5 8.2V7.2C0.5 5.7 5.5 5.7 5.5 7.2V8.2Z" fill="#2aa02a"/><circle cx="3" cy="11.1" r="1.5" fill="#f0c030"/><path d="M0.5 14.6V13.6C0.5 12.1 5.5 12.1 5.5 13.6V14.6Z" fill="#1f5fd0"/><defs><linearGradient id="g38" x1="0" y1="0" x2="0" y2="1"><stop offset="0" stop-color="#fff3a0"/><stop offset="1" stop-color="#f2d24a"/></linearGradient></defs><path d="M8.5 8.8V6.1L9.5 4.6H11.02L11.620000000000001 6.6H14.5V8.8Z" fill="url(#g38)" stroke="#c09a1a" stroke-width="0.9" stroke-linejoin="round"/><defs><linearGradient id="g39" x1="0" y1="0" x2="0" y2="1"><stop offset="0" stop-color="#fff3a0"/><stop offset="1" stop-color="#f2d24a"/></linearGradient></defs><path d="M8.5 15.2V12.5L9.5 11H11.02L11.620000000000001 13H14.5V15.2Z" fill="url(#g39)" stroke="#c09a1a" stroke-width="0.9" stroke-linejoin="round"/><path d="M11.5 0V3.4M9.5 1.6L11.5 3.8L13.5 1.6" stroke="#1a3fd0" stroke-width="1.2" fill="none"/></svg>
<span class="t" style="left:25.40px;top:401.19px;font-size:11px;line-height:14px;letter-spacing:0.015px;">Route Entry to Group</span>
<svg style="left:5px;top:421px;" width="16" height="16" viewBox="0 0 16 16"><circle cx="4.2" cy="3.35" r="2.85" fill="#f2c94a"/><path d="M-0.5499999999999998 10.0V8.100000000000001C-0.5499999999999998 5.25 8.95 5.25 8.95 8.100000000000001V10.0Z" fill="#46b83a"/><defs><linearGradient id="g40" x1="0" y1="0" x2="0" y2="1"><stop offset="0" stop-color="#fff3a0"/><stop offset="1" stop-color="#f2d24a"/></linearGradient></defs><path d="M7 15.5V9.0L8 7.5H10.57L11.42 9.5H15.5V15.5Z" fill="url(#g40)" stroke="#c09a1a" stroke-width="0.9" stroke-linejoin="round"/><path d="M11.5 2.6V6.0M9.5 4.2L11.5 6.4L13.5 4.2" stroke="#1a3fd0" stroke-width="1.2" fill="none"/></svg>
<span class="t" style="left:25.40px;top:422.19px;font-size:11px;line-height:14px;letter-spacing:0.009px;">Route Entry to User</span>
<div style="left:0px;top:440px;width:227px;height:16px;background:linear-gradient(90deg,rgba(255,255,255,0) 0%,rgba(255,255,255,0) 45%,rgba(255,255,255,0.4) 100%),linear-gradient(#ebebeb 0%,#d2d2d2 28%,#b8b8b8 58%,#b6b6b6 80%,#c4c4c4 100%);"></div>
<svg style="left:4px;top:443px;" width="9" height="9" viewBox="0 0 9 9"><rect x="0.5" y="0.5" width="8" height="8" rx="1" fill="#fbfbfb" stroke="#8e9aac"/><path d="M2.2 4.5H6.8" stroke="#000" stroke-width="1.2"/></svg>
<span class="t" style="left:18.50px;top:440.89px;font-size:11px;line-height:14px;letter-spacing:0.323px;font-weight:bold;">Laserfiche Actions</span>
<svg style="left:5px;top:459px;" width="16" height="16" viewBox="0 0 16 16"><defs><linearGradient id="g41" x1="0" y1="0" x2="0" y2="1"><stop offset="0" stop-color="#fff07a"/><stop offset="1" stop-color="#fbd42c"/></linearGradient></defs><path d="M0 0H16V16H5L0 11.5Z" fill="url(#g41)"/><path d="M0 11.5H5V16Z" fill="#c79a10"/></svg>
<span class="t" style="left:26.30px;top:460.19px;font-size:11px;line-height:14px;letter-spacing:-0.149px;">Add Sticky Note</span>
<svg style="left:5px;top:480px;" width="16" height="16" viewBox="0 0 16 16"><rect x="0.5" y="0.5" width="15" height="15" fill="#fff" stroke="#222" stroke-width="1" stroke-dasharray="1 1" shape-rendering="crispEdges"/><text x="8" y="13.3" font-size="16.5" text-anchor="middle" font-family="Liberation Serif,serif" fill="#000">T</text></svg>
<span class="t" style="left:26.30px;top:481.19px;font-size:11px;line-height:14px;letter-spacing:0.026px;">Add Text Box</span>
<svg style="left:5px;top:501px;" width="16" height="16" viewBox="0 0 16 16"><defs><radialGradient id="g42" cx="0.4" cy="0.3" r="0.7"><stop offset="0" stop-color="#d8382c"/><stop offset="1" stop-color="#8e0d0d"/></radialGradient></defs><path d="M8 0C10.8 0 12.6 2 12.6 4.4C12.6 7 10.2 8.6 10 12.6H6C5.8 8.6 3.4 7 3.4 4.4C3.4 2 5.2 0 8 0Z" fill="url(#g42)"/><rect x="0" y="13.6" width="16" height="1.9" fill="#b07d12"/></svg>
<span class="t" style="left:26.30px;top:502.19px;font-size:11px;line-height:14px;letter-spacing:-0.195px;">Apply Stamp</span>
<svg style="left:5px;top:522px;" width="16" height="16" viewBox="0 0 16 16"><defs><linearGradient id="g43" x1="0" y1="0" x2="0" y2="1"><stop offset="0" stop-color="#7ad65a"/><stop offset="1" stop-color="#2f9a2a"/></linearGradient></defs><rect x="7.300" y="3.300" width="8" height="10" fill="#fff" stroke="#1838b0" stroke-width="1.500"/><path d="M9.500 6.500H13.500M9.500 8.700H13.500" stroke="#3a8ef0" stroke-width="1.100"/><ellipse cx="4.500" cy="8" rx="4.800" ry="7.500" fill="#e8f27a" opacity="0.550"/><path d="M0 15.500V12.500C0 8.200 9 8.200 9 12.500V15.500Z" fill="url(#g43)"/><circle cx="4.400" cy="4.600" r="3.100" fill="#f5c93a"/></svg>
<span class="t" style="left:26.30px;top:523.19px;font-size:11px;line-height:14px;letter-spacing:-0.242px;">Assign Rights</span>
<svg style="left:5px;top:543px;" width="16" height="16" viewBox="0 0 16 16"><path d="M5.5 0.5H12L15.5 4V12.5H5.5Z" fill="#f4f4f4" stroke="#8a8a8a"/><path d="M0.5 3.5H8L11 6.5V15.5H0.5Z" fill="#fafafa" stroke="#8a8a8a"/><text x="4" y="9.5" font-size="8.5" font-weight="bold" text-anchor="middle" font-family="Liberation Sans,sans-serif" fill="#2a8a2a">e</text><path d="M15.5 9C12 8.6 10.5 10 10 11.5" stroke="#2fb02f" stroke-width="2.2" fill="none"/><path d="M6.5 12L11.5 8.6V15.4Z" fill="#2fb02f"/></svg>
<span class="t" style="left:26.30px;top:544.19px;font-size:11px;line-height:14px;letter-spacing:-0.131px;">Attach Electronic Document</span>
<svg style="left:5px;top:564px;" width="16" height="16" viewBox="0 0 16 16"><path d="M2.5 2.5H10L13.5 6V15.5H2.5Z" fill="#fdfdfd" stroke="#8c8c8c"/><path d="M10 2.5V6H13.5" fill="#e6e6e6" stroke="#8c8c8c" stroke-width="0.8"/><path d="M4.20 3.00L6.40 3.00M3.85 3.85L4.92 4.92M3.00 4.20L3.00 6.40M2.15 3.85L1.08 4.92M1.80 3.00L-0.40 3.00M2.15 2.15L1.08 1.08M3.00 1.80L3.00 -0.40M3.85 2.15L4.92 1.08" stroke="#f2c200" stroke-width="1.1" fill="none"/><circle cx="3" cy="3" r="1" fill="#fff8c0"/></svg>
<span class="t" style="left:25.75px;top:565.19px;font-size:11px;line-height:14px;letter-spacing:0.046px;">Create Entry</span>
<svg style="left:5px;top:585px;" width="16" height="16" viewBox="0 0 16 16"><defs><linearGradient id="g44" x1="0" y1="0" x2="0" y2="1"><stop offset="0" stop-color="#ffe95c"/><stop offset="1" stop-color="#fbd02a"/></linearGradient></defs><path d="M0 0H14V14H3.5L0 10.5Z" fill="url(#g44)"/><path d="M0 10.5H3.5V14Z" fill="#b8860b"/><path d="M5.5 5.2C8 6.5 11.5 10 15.5 14.8" stroke="#e21b12" stroke-width="1.5" fill="none" stroke-linecap="round"/><path d="M15.6 4.6C12 7 8.5 10.5 6.6 15" stroke="#e21b12" stroke-width="1.5" fill="none" stroke-linecap="round"/></svg>
<span class="t" style="left:25.40px;top:586.19px;font-size:11px;line-height:14px;letter-spacing:0.070px;">Delete Annotation</span>
<div style="left:227px;top:132px;width:17px;height:468px;background:#fff;border-left:1px solid #d0d0d0;"></div>
<div style="left:227px;top:132px;width:17px;height:17px;background:#fff;border:1px solid #cdcdcd;"></div>
<svg style="left:230.5px;top:136.5px;" width="10" height="8" viewBox="0 0 10 8"><path d="M1 6.5L5 2.5L9 6.5" stroke="#555" stroke-width="1.2" fill="none"/></svg>
<div style="left:227px;top:149px;width:17px;height:82px;background:#cdcdcd;border:1px solid #a6a6a6;"></div>
<svg style="left:231.5px;top:185px;" width="8" height="8" viewBox="0 0 8 8"><path d="M0 1.5H8M0 4.5H8M0 7.5H8" stroke="#555" stroke-width="1.1"/></svg>
<div style="left:227px;top:582px;width:17px;height:17px;background:#fff;border:1px solid #cdcdcd;"></div>
<svg style="left:230.5px;top:586.5px;" width="10" height="8" viewBox="0 0 10 8"><path d="M1 1.5L5 5.5L9 1.5" stroke="#555" stroke-width="1.2" fill="none"/></svg>
<div style="left:0px;top:602px;width:244px;height:2px;background:#fdfdfd;"></div>
<div style="left:0px;top:604px;width:244px;height:21px;background:#f0f0f0;border-top:1px solid #a8a8a8;"></div>
<div style="left:0px;top:603px;width:50px;height:22px;background:#fff;border:1px solid #b5b5b5;border-top:none;border-radius:0 0 4px 4px;"></div>
<span class="t" style="left:5.10px;top:608.59px;font-size:11px;line-height:14px;letter-spacing:0.014px;">Toolbox</span>
<span class="t" style="left:54.15px;top:608.59px;font-size:11px;line-height:14px;letter-spacing:-0.389px;color:#6e6e6e;">Common Searches</span>
<div style="left:147px;top:607px;width:1px;height:15px;background:#a0a0a0;"></div>
<div style="left:0px;top:650px;width:244px;height:188px;background:#a9a9a9;"></div>
<div style="left:0px;top:837px;width:244px;height:1px;background:#b9b9b9;"></div>
<div style="left:248px;top:86px;width:495px;height:752px;background:#f0f0f0;border:1px solid #a5a5a5;box-shadow:inset 1px 1px 0 #fff;"></div>
<div style="left:249px;top:87px;width:493px;height:21px;background:#f0f0f0;"></div>
<svg style="left:0;top:0" width="1440" height="900"><defs><linearGradient id="tbg" x1="0" y1="0" x2="0" y2="1"><stop offset="0" stop-color="#fdfdfd"/><stop offset="1" stop-color="#e6e6e6"/></linearGradient></defs><path d="M256 108.5L272 92.5Q274.5 90.5 277 90.5H335Q337.5 90.5 337.5 93V108.5Z" fill="url(#tbg)" stroke="#858585"/><path d="M337.5 103L347 93Q349 90.500 352 90.500H426Q428.500 90.500 428.500 93V108.5H337.5Z" fill="url(#tbg)" stroke="#858585"/><path d="M250 108.5H422L438 92Q439.5 90.5 442 90.5H614Q616.5 90.5 616.5 93V108.5H742" fill="none" stroke="#4a9af0" stroke-width="1.2"/><path d="M422.500 108.500L438.500 92.500Q440 91.200 442 91.200H614Q616 91.200 616 93V109.5H421.500Z" fill="#fff"/></svg>
<span class="t" style="left:276.50px;top:92.99px;font-size:11px;line-height:14px;letter-spacing:0.002px;">Workflow 1</span>
<span class="t" style="left:350.05px;top:92.99px;font-size:11px;line-height:14px;letter-spacing:-0.230px;">Search Results</span>
<span class="t" style="left:437.60px;top:92.99px;font-size:11px;line-height:14px;letter-spacing:0.486px;font-weight:bold;">Rental Invoice Approval - Tes...</span>
<svg style="left:683px;top:98px;" width="8" height="5" viewBox="0 0 8 5"><path d="M0 0H8L4 4.5Z" fill="#000"/></svg>
<svg style="left:699px;top:94.5px;" width="6" height="9" viewBox="0 0 6 9"><path d="M5.2 0.6L0.9 4.5L5.2 8.4Z" fill="none" stroke="#000" stroke-width="1.2"/></svg>
<svg style="left:712px;top:94.5px;" width="6" height="9" viewBox="0 0 6 9"><path d="M0.8 0.6L5.1 4.5L0.8 8.4Z" fill="none" stroke="#000" stroke-width="1.2"/></svg>
<svg style="left:725px;top:94.4px;" width="10" height="9" viewBox="0 0 10 9"><path d="M1.400 0.900L8.600 7.900M8.600 0.900L1.400 7.900" stroke="#000" stroke-width="2.400"/></svg>
<div style="left:250px;top:109px;width:475px;height:710px;background:#a9a9a9;"></div>
<div style="left:261px;top:109px;width:464px;height:691px;background:#fff;border-left:1px solid #000;border-bottom:1px solid #000;"></div>
<div style="left:267px;top:800px;width:458px;height:5px;background:linear-gradient(#707070,#a9a9a9);"></div>
<div style="left:724px;top:109px;width:17px;height:710px;background:#fff;border-left:1px solid #d0d0d0;"></div>
<div style="left:724px;top:109px;width:17px;height:17px;background:#fff;border:1px solid #d4d4d4;"></div>
<svg style="left:727.5px;top:113px;" width="10" height="8" viewBox="0 0 10 8"><path d="M1 6.5L5 2.5L9 6.5" stroke="#555" stroke-width="1.2" fill="none"/></svg>
<div style="left:725px;top:583px;width:16px;height:219px;background:#dadada;border:1px solid #b4b4b4;"></div>
<svg style="left:729px;top:688px;" width="8" height="8" viewBox="0 0 8 8"><path d="M0 1.5H8M0 4.5H8M0 7.5H8" stroke="#555" stroke-width="1.1"/></svg>
<div style="left:725px;top:802px;width:16px;height:17px;background:#fff;border:1px solid #dadada;"></div>
<svg style="left:728px;top:806px;" width="10" height="8" viewBox="0 0 10 8"><path d="M1 1.5L5 5.5L9 1.5" stroke="#555" stroke-width="1.2" fill="none"/></svg>
<div style="left:250px;top:819px;width:475px;height:17px;background:#fff;border-top:1px solid #d0d0d0;"></div>
<div style="left:250px;top:820px;width:17px;height:16px;background:#fff;border:1px solid #dadada;"></div>
<svg style="left:254px;top:823px;" width="8" height="10" viewBox="0 0 8 10"><path d="M6.5 1L2.5 5L6.5 9" stroke="#555" stroke-width="1.2" fill="none"/></svg>
<div style="left:271px;top:820px;width:240px;height:16px;background:#dadada;border:1px solid #b4b4b4;"></div>
<svg style="left:387px;top:824px;" width="8" height="8" viewBox="0 0 8 8"><path d="M1.5 0V8M4.5 0V8M7.5 0V8" stroke="#555" stroke-width="1.1"/></svg>
<div style="left:708px;top:820px;width:17px;height:16px;background:#fff;border:1px solid #dadada;"></div>
<svg style="left:712px;top:823px;" width="8" height="10" viewBox="0 0 8 10"><path d="M1.5 1L5.5 5L1.5 9" stroke="#555" stroke-width="1.2" fill="none"/></svg>
<div style="left:725px;top:819px;width:17px;height:18px;background:#f0f0f0;"></div>
<svg style="left:0;top:0" width="1440" height="900"><path d="M514.5 109H520.5L517.5 113.5Z" fill="#b6b6b6"/></svg>
<svg style="left:480px;top:126px;" width="16" height="16" viewBox="0 0 16 16"><defs><linearGradient id="g45" x1="0" y1="0" x2="1" y2="1"><stop offset="0" stop-color="#d2f7c6"/><stop offset="0.55" stop-color="#8fe27e"/><stop offset="1" stop-color="#4cc43e"/></linearGradient></defs><path d="M5.9 1.2H10.1V5.9H14.8V10.1H10.1V14.8H5.9V10.1H1.2V5.9H5.9Z" fill="url(#g45)" stroke="#27a227" stroke-width="1.4" stroke-linejoin="round"/></svg>
<span class="t" style="left:497.75px;top:122.49px;font-size:11px;line-height:14px;letter-spacing:-0.217px;">GL Sum</span>
<span class="t" style="left:497.75px;top:135.49px;font-size:11px;line-height:14px;letter-spacing:-0.150px;">Calculation</span>
<svg style="left:0;top:0" width="1440" height="900"><path d="M517.5 156V170" stroke="#b6b6b6" stroke-width="1" fill="none"/><path d="M514.5 169H520.5L517.5 174.5Z" fill="#b6b6b6"/></svg>
<svg style="left:418px;top:185px;" width="9" height="9" viewBox="0 0 9 9"><defs><linearGradient id="g46" x1="0" y1="0" x2="0" y2="1"><stop offset="0" stop-color="#fdfefe"/><stop offset="1" stop-color="#c3cfe6"/></linearGradient></defs><rect x="0.5" y="0.5" width="8" height="8" rx="1.2" fill="url(#g46)" stroke="#6f80a8"/><path d="M0.800 8.500H8.200" stroke="#4a5a85" stroke-width="1"/><path d="M2.200 4.500H6.800" stroke="#1c2c5c" stroke-width="1.300"/></svg>
<svg style="left:432.5px;top:181.5px;" width="16" height="16" viewBox="0 0 16 16"><defs><linearGradient id="g47" x1="0" y1="0" x2="1" y2="1"><stop offset="0" stop-color="#fff06a"/><stop offset="1" stop-color="#ffd500"/></linearGradient></defs><path d="M8 0.200L15.800 8L8 15.800L0.200 8Z" fill="#f5cf1e"/><path d="M8 1.300L14.700 8L8 14.700L1.300 8Z" fill="#fffbd0"/><path d="M8 2.300L13.700 8L8 13.700L2.300 8Z" fill="url(#g47)"/><path d="M8 4V11M4.800 8H11.200" stroke="#111" stroke-width="1" fill="none"/><path d="M6.600 10.200H9.400L8 12.200ZM6 6.800V9.200L4.200 8ZM10 6.800V9.200L11.800 8Z" fill="#111"/></svg>
<span class="t" style="left:451.60px;top:182.99px;font-size:11px;line-height:14px;letter-spacing:-0.158px;">Does invoice total match GL Sum?</span>
<svg style="left:0;top:0" width="1440" height="900"><path d="M517.5 200V208" stroke="#b6b6b6" stroke-width="1" fill="none"/></svg>
<svg style="left:0;top:0" width="1440" height="900"><path d="M517.5 207.2L523.0 212.700L517.5 218.200L512.0 212.700Z" fill="#c2c2c2"/></svg>
<svg style="left:0;top:0" width="1440" height="900"><path d="M512.5 212.5H401.5V270" stroke="#adadad" stroke-width="1" stroke-dasharray="3 2" fill="none"/></svg>
<svg style="left:0;top:0" width="1440" height="900"><path d="M398.5 273.5H404.5L401.5 279Z" fill="#b6b6b6"/></svg>
<svg style="left:0;top:0" width="1440" height="900"><path d="M522.5 212.5H583.5V220" stroke="#adadad" stroke-width="1" stroke-dasharray="3 2" fill="none"/></svg>
<svg style="left:0;top:0" width="1440" height="900"><path d="M580.5 218.5H586.5L583.5 224Z" fill="#b6b6b6"/></svg>
<svg style="left:559px;top:235.5px;" width="9" height="9" viewBox="0 0 9 9"><defs><linearGradient id="g48" x1="0" y1="0" x2="0" y2="1"><stop offset="0" stop-color="#fdfefe"/><stop offset="1" stop-color="#c3cfe6"/></linearGradient></defs><rect x="0.5" y="0.5" width="8" height="8" rx="1.2" fill="url(#g48)" stroke="#6f80a8"/><path d="M0.800 8.500H8.200" stroke="#4a5a85" stroke-width="1"/><path d="M2.200 4.500H6.800" stroke="#1c2c5c" stroke-width="1.300"/></svg>
<svg style="left:573.5px;top:231.5px;" width="16" height="16" viewBox="0 0 16 16"><defs><linearGradient id="g49" x1="0" y1="0" x2="1" y2="1"><stop offset="0" stop-color="#fff06a"/><stop offset="1" stop-color="#ffd500"/></linearGradient></defs><path d="M8 0.200L15.800 8L8 15.800L0.200 8Z" fill="#f5cf1e"/><path d="M8 1.300L14.700 8L8 14.700L1.300 8Z" fill="#fffbd0"/><path d="M8 2.300L13.700 8L8 13.700L2.300 8Z" fill="url(#g49)"/><path d="M7.300 4.500V8.700H10" stroke="#111" stroke-width="1.100" fill="none"/><path d="M9.700 7V10.400L11.800 8.700Z" fill="#111"/></svg>
<span class="t" style="left:592.30px;top:232.99px;font-size:11px;line-height:14px;letter-spacing:0.256px;">No</span>
<svg style="left:0;top:0" width="1440" height="900"><path d="M583.5 250V264" stroke="#b6b6b6" stroke-width="1" fill="none"/><path d="M580.5 263H586.5L583.5 268.5Z" fill="#b6b6b6"/></svg>
<svg style="left:536px;top:281px;" width="16" height="17" viewBox="0 0 16 16"><defs><radialGradient id="g50" cx="0.4" cy="0.3" r="0.7"><stop offset="0" stop-color="#d8382c"/><stop offset="1" stop-color="#8e0d0d"/></radialGradient></defs><path d="M8 0C10.8 0 12.6 2 12.6 4.4C12.6 7 10.2 8.6 10 12.6H6C5.8 8.6 3.4 7 3.4 4.4C3.4 2 5.2 0 8 0Z" fill="url(#g50)"/><rect x="0" y="13.6" width="16" height="1.9" fill="#b07d12"/></svg>
<span class="t" style="left:555.00px;top:276.19px;font-size:11px;line-height:14px;letter-spacing:-0.188px;">Apply Warning</span>
<span class="t" style="left:554.55px;top:289.19px;font-size:11px;line-height:14px;letter-spacing:-0.556px;">Stamp</span>
<svg style="left:0;top:0" width="1440" height="900"><path d="M583.5 310V324" stroke="#b6b6b6" stroke-width="1" fill="none"/><path d="M580.5 323H586.5L583.5 328.5Z" fill="#b6b6b6"/></svg>
<svg style="left:513px;top:341px;" width="16" height="16" viewBox="0 0 16 16"><defs><linearGradient id="g51" x1="0" y1="0" x2="1" y2="1"><stop offset="0" stop-color="#f2f7ff"/><stop offset="1" stop-color="#b9d3f7"/></linearGradient></defs><rect x="2.5" y="1.5" width="11" height="13" rx="1" fill="url(#g51)" stroke="#6d8fca"/><path d="M2.5 14.5H13.5V2" stroke="#2b4a8f" fill="none"/><path d="M5 5H11M5 8H11M5 11H11" stroke="#fff" stroke-width="1.4"/><path d="M5 6H11M5 9H11M5 12H11" stroke="#9db9e6" stroke-width="0.6"/></svg>
<span class="t" style="left:531.10px;top:335.99px;font-size:11px;line-height:14px;letter-spacing:-0.042px;">Make Accounts Approval</span>
<span class="t" style="left:531.10px;top:348.99px;font-size:11px;line-height:14px;letter-spacing:-0.192px;">Field PENDING</span>
<svg style="left:0;top:0" width="1440" height="900"><path d="M583.5 370V383.5" stroke="#b6b6b6" stroke-width="1" fill="none"/><path d="M580.5 382.5H586.5L583.5 388.0Z" fill="#b6b6b6"/></svg>
<div style="left:487px;top:388px;width:195px;height:42px;background:#fff;border:5px solid #f7e32a;"></div>
<svg style="left:495px;top:401px;" width="16" height="16" viewBox="0 0 16 16"><path d="M1 13.5L3 9.2L11.5 1.2L14.5 4L6 12Z" fill="#f29a1a"/><path d="M11.5 1.2L14.5 4L15.8 2.6C16 1.5 14.5 0 13.2 0.2Z" fill="#e21b12"/><path d="M1 13.5L3 9.2L6 12Z" fill="#f5deb3"/><path d="M1 13.5L1.9 11.6L3.2 12.8Z" fill="#333"/><circle cx="10.8" cy="11.4" r="4" fill="#f4f7fb" stroke="#7b8aa0" stroke-width="1"/><path d="M10.8 9V11.6L12.6 12.4" stroke="#44546a" stroke-width="0.9" fill="none"/></svg>
<span class="t" style="left:513.70px;top:395.99px;font-size:11px;line-height:14px;letter-spacing:-0.089px;">Wait until GL Sum Matches Total</span>
<span class="t" style="left:513.25px;top:408.99px;font-size:11px;line-height:14px;letter-spacing:-0.100px;">and Accounts Re-Approves</span>
<svg style="left:0;top:0" width="1440" height="900"><path d="M583.5 430V448" stroke="#b6b6b6" stroke-width="1" fill="none"/></svg>
<svg style="left:358px;top:296px;" width="9" height="9" viewBox="0 0 9 9"><defs><linearGradient id="g52" x1="0" y1="0" x2="0" y2="1"><stop offset="0" stop-color="#fdfefe"/><stop offset="1" stop-color="#c3cfe6"/></linearGradient></defs><rect x="0.5" y="0.5" width="8" height="8" rx="1.2" fill="url(#g52)" stroke="#6f80a8"/><path d="M0.800 8.500H8.200" stroke="#4a5a85" stroke-width="1"/><path d="M2.200 4.500H6.800" stroke="#1c2c5c" stroke-width="1.300"/></svg>
<svg style="left:372.5px;top:292.5px;" width="16" height="16" viewBox="0 0 16 16"><defs><linearGradient id="g53" x1="0" y1="0" x2="1" y2="1"><stop offset="0" stop-color="#fff06a"/><stop offset="1" stop-color="#ffd500"/></linearGradient></defs><path d="M8 0.200L15.800 8L8 15.800L0.200 8Z" fill="#f5cf1e"/><path d="M8 1.300L14.700 8L8 14.700L1.300 8Z" fill="#fffbd0"/><path d="M8 2.300L13.700 8L8 13.700L2.300 8Z" fill="url(#g53)"/><path d="M7.300 4.500V8.700H10" stroke="#111" stroke-width="1.100" fill="none"/><path d="M9.700 7V10.400L11.800 8.700Z" fill="#111"/></svg>
<span class="t" style="left:391.80px;top:287.99px;font-size:11px;line-height:14px;letter-spacing:-0.269px;">Yes - Pass</span>
<span class="t" style="left:391.80px;top:300.99px;font-size:11px;line-height:14px;letter-spacing:-0.151px;">Through</span>
<svg style="left:0;top:0" width="1440" height="900"><path d="M401.5 316V333" stroke="#b6b6b6" stroke-width="1" fill="none"/></svg>
<span class="t" style="left:389.10px;top:334.19px;font-size:11px;line-height:14px;letter-spacing:-0.008px;color:#8c8c8c;">Drop</span>
<span class="t" style="left:381.20px;top:347.19px;font-size:11px;line-height:14px;letter-spacing:-0.194px;color:#8c8c8c;">Activities</span>
<span class="t" style="left:389.10px;top:360.19px;font-size:11px;line-height:14px;letter-spacing:0.008px;color:#8c8c8c;">Here</span>
<svg style="left:0;top:0" width="1440" height="900"><path d="M401.5 374V381" stroke="#b6b6b6" stroke-width="1" fill="none"/></svg>
<svg style="left:0;top:0" width="1440" height="900"><path d="M401.5 381V448.500H583.5" stroke="#adadad" stroke-width="1" stroke-dasharray="3 2" fill="none"/></svg>
<svg style="left:0;top:0" width="1440" height="900"><path d="M517.5 449V468.5" stroke="#b6b6b6" stroke-width="1" fill="none"/><path d="M514.5 467.5H520.5L517.5 473.0Z" fill="#b6b6b6"/></svg>
<svg style="left:466px;top:481px;" width="16" height="16" viewBox="0 0 16 16"><defs><linearGradient id="g54" x1="0" y1="0" x2="1" y2="1"><stop offset="0" stop-color="#3f83f0"/><stop offset="1" stop-color="#b8d2fb"/></linearGradient></defs><path d="M1.5 0.5H9.5L12.5 3.5V15H1.5Z" fill="url(#g54)"/><path d="M9.5 0.5V3.5H12.5Z" fill="#e8f0ff"/><path d="M1.5 15H12.5" stroke="#2f5fd0" stroke-width="1"/><path d="M4 13.5C3 12 4 10.5 5.5 10.8C6 9.5 8 9.5 8.3 11" stroke="#fff" stroke-width="1.4" fill="none"/><rect x="8" y="6" width="8" height="8" fill="#1aa51a"/><path d="M12 7.2V12M10 10.3L12 12.5L14 10.3" stroke="#fff" stroke-width="1.4" fill="none"/></svg>
<span class="t" style="left:484.00px;top:481.79px;font-size:11px;line-height:14px;letter-spacing:0.032px;">Invoke Workflow</span>
<svg style="left:0;top:0" width="1440" height="900"><path d="M517.5 505V518.5" stroke="#b6b6b6" stroke-width="1" fill="none"/><path d="M514.5 517.5H520.5L517.5 523.0Z" fill="#b6b6b6"/></svg>
<svg style="left:466px;top:536.5px;" width="16" height="16" viewBox="0 0 16 16"><defs><linearGradient id="g55" x1="0" y1="0" x2="0" y2="1"><stop offset="0" stop-color="#fff3a0"/><stop offset="1" stop-color="#f2d24a"/></linearGradient></defs><path d="M2 15.0V6.0L3 4.5H7.25L8.5 6.5H14.5V15.0Z" fill="url(#g55)" stroke="#c09a1a" stroke-width="0.9" stroke-linejoin="round"/><path d="M8.5 0.3V3.6999999999999997M6.5 1.9000000000000001L8.5 4.1L10.5 1.9000000000000001" stroke="#1a3fd0" stroke-width="1.2" fill="none"/></svg>
<span class="t" style="left:483.75px;top:531.19px;font-size:11px;line-height:14px;letter-spacing:-0.209px;">Send to</span>
<span class="t" style="left:483.30px;top:543.79px;font-size:11px;line-height:14px;letter-spacing:-0.243px;">Processed Folder</span>
<svg style="left:0;top:0" width="1440" height="900"><path d="M517.5 565V578.5" stroke="#b6b6b6" stroke-width="1" fill="none"/><path d="M514.5 577.5H520.5L517.5 583.0Z" fill="#b6b6b6"/></svg>
<svg style="left:477px;top:596px;" width="16" height="16" viewBox="0 0 16 16"><defs><linearGradient id="g56" x1="0" y1="0" x2="1" y2="1"><stop offset="0" stop-color="#f2f7ff"/><stop offset="1" stop-color="#b9d3f7"/></linearGradient></defs><rect x="2.5" y="1.5" width="11" height="13" rx="1" fill="url(#g56)" stroke="#6d8fca"/><path d="M2.5 14.5H13.5V2" stroke="#2b4a8f" fill="none"/><path d="M5 5H11M5 8H11M5 11H11" stroke="#fff" stroke-width="1.4"/><path d="M5 6H11M5 9H11M5 12H11" stroke="#9db9e6" stroke-width="0.6"/></svg>
<span class="t" style="left:496.20px;top:591.19px;font-size:11px;line-height:14px;letter-spacing:-0.386px;">Assign Field</span>
<span class="t" style="left:496.20px;top:603.79px;font-size:11px;line-height:14px;letter-spacing:-0.233px;">Values</span>
<svg style="left:0;top:0" width="1440" height="900"><path d="M517.5 625V638.5" stroke="#b6b6b6" stroke-width="1" fill="none"/><path d="M514.5 637.5H520.5L517.5 643.0Z" fill="#b6b6b6"/></svg>
<svg style="left:473px;top:656px;" width="16" height="16" viewBox="0 0 16 16"><rect x="0.5" y="0.5" width="15" height="15" fill="#fff" stroke="#222" stroke-width="1" stroke-dasharray="1 1" shape-rendering="crispEdges"/><text x="8" y="13.3" font-size="16.5" text-anchor="middle" font-family="Liberation Serif,serif" fill="#000">T</text></svg>
<span class="t" style="left:492.00px;top:651.19px;font-size:11px;line-height:14px;letter-spacing:-0.110px;">Add Text Box</span>
<span class="t" style="left:491.35px;top:664.19px;font-size:11px;line-height:14px;letter-spacing:-0.187px;">(AP approval)</span>
<svg style="left:0;top:0" width="1440" height="900"><path d="M517.5 685V703" stroke="#b6b6b6" stroke-width="1" fill="none"/></svg>
<svg style="left:0;top:0" width="1440" height="900"><path d="M517.5 703.500H724" stroke="#adadad" stroke-width="1" stroke-dasharray="3 2" fill="none"/></svg>
<svg style="left:0;top:0" width="1440" height="900"><path d="M595.5 703V728" stroke="#b6b6b6" stroke-width="1" fill="none"/></svg>
<svg style="left:0;top:0" width="1440" height="900"><path d="M595.5 728.500H724" stroke="#adadad" stroke-width="1" stroke-dasharray="3 2" fill="none"/></svg>
<svg style="left:0;top:0" width="1440" height="900"><path d="M673.5 728V748" stroke="#b6b6b6" stroke-width="1" fill="none"/></svg>
<svg style="left:662px;top:752px;" width="24" height="25" viewBox="0 0 24 25"><defs><linearGradient id="stopg" x1="0" y1="0" x2="1" y2="1"><stop offset="0" stop-color="#ff3a12"/><stop offset="1" stop-color="#c20d05"/></linearGradient></defs><polygon points="23.39,17.39 16.89,23.89 7.71,23.89 1.21,17.39 1.21,8.21 7.71,1.71 16.89,1.71 23.39,8.21" fill="#9a9a9a" opacity="0.7"/><polygon points="21.94,15.82 15.82,21.94 7.18,21.94 1.06,15.82 1.06,7.18 7.18,1.06 15.82,1.06 21.94,7.18" fill="url(#stopg)" stroke="#fff" stroke-width="1.2"/></svg>
<div style="left:747px;top:106px;width:693px;height:732px;background:#dbe9fb;"></div>
<div style="left:743px;top:87px;width:4px;height:751px;background:#f0f0f0;"></div>
<div style="left:747px;top:106px;width:693px;height:37px;background:linear-gradient(#1d55c2 0%,#2a62cb 30%,#5c8ddb 75%,#78a3e6 100%);"></div>
<div style="left:753px;top:112px;width:681px;height:26px;border:1px solid #000;background:linear-gradient(rgba(255,255,255,0.38) 0%,rgba(255,255,255,0) 70%,rgba(0,30,120,0.15) 100%),linear-gradient(90deg,#2458bd 0%,#2b60c4 30%,#5a88da 65%,#82a8ea 100%);"></div>
<span class="t" style="left:762.50px;top:116.60px;font-size:13px;line-height:17px;letter-spacing:-0.070px;font-weight:bold;color:#fff;text-decoration:underline;">Wait until GL Sum Matches Total and Accounts Re-Approves</span>
<svg style="left:1412px;top:116.5px;" width="16" height="16" viewBox="0 0 16 16"><circle cx="8" cy="8" r="7.8" fill="#1a8ad8"/><circle cx="8" cy="8" r="7.3" fill="none" stroke="#4fb0ee" stroke-width="0.8"/><text x="8" y="12.6" font-size="13" font-weight="bold" text-anchor="middle" font-family="Liberation Sans,sans-serif" fill="#fff">?</text></svg>
<div style="left:753px;top:149px;width:681px;height:59px;background:#dbe9fb;border:1px solid #2b5fc7;"></div>
<div style="left:754px;top:150px;width:679px;height:25px;background:linear-gradient(90deg,#d3e3fa 0%,#bdd1f6 25%,#90b0ea 60%,#6a90de 100%);border-bottom:1px solid #2b5fc7;"></div>
<span class="t" style="left:759.30px;top:153.70px;font-size:13px;line-height:17px;letter-spacing:-0.188px;font-weight:bold;color:#5a46b4;">Activity Name</span>
<div style="left:760px;top:181px;width:667px;height:20px;background:#fff;border:1px solid #7a7a7a;"></div>
<span class="t" style="left:763.20px;top:183.69px;font-size:11px;line-height:14px;letter-spacing:-0.127px;">Wait until GL Sum Matches Total and Accounts Re-Approves</span>
<div style="left:753px;top:214px;width:681px;height:96px;background:#dbe9fb;border:1px solid #2b5fc7;"></div>
<div style="left:754px;top:215px;width:679px;height:25px;background:linear-gradient(90deg,#d3e3fa 0%,#bdd1f6 25%,#90b0ea 60%,#6a90de 100%);border-bottom:1px solid #2b5fc7;"></div>
<span class="t" style="left:759.30px;top:218.70px;font-size:13px;line-height:17px;letter-spacing:-0.134px;font-weight:bold;color:#5a46b4;">Activity Description</span>
<div style="left:760px;top:246px;width:667px;height:58px;background:#fff;border:1px solid #7a7a7a;"></div>
<span class="t" style="left:762.30px;top:248.99px;font-size:11px;line-height:14px;letter-spacing:-0.141px;">Pauses the workflow until a specified condition becomes true.</span>
<div style="left:1408px;top:248px;width:17px;height:54px;background:#fff;border:1px solid #dcdcdc;"></div>
<div style="left:1408px;top:248px;width:17px;height:17px;background:#fff;border:1px solid #dcdcdc;"></div>
<svg style="left:1411.5px;top:252.5px;" width="10" height="8" viewBox="0 0 10 8"><path d="M1 6.5L5 2.5L9 6.5" stroke="#606060" stroke-width="1.2" fill="none"/></svg>
<div style="left:1408px;top:285px;width:17px;height:17px;background:#fff;border:1px solid #dcdcdc;"></div>
<svg style="left:1411.5px;top:289.5px;" width="10" height="8" viewBox="0 0 10 8"><path d="M1 1.5L5 5.5L9 1.5" stroke="#606060" stroke-width="1.2" fill="none"/></svg>
<div style="left:753px;top:317px;width:681px;height:76px;background:#dbe9fb;border:1px solid #2b5fc7;"></div>
<div style="left:754px;top:318px;width:679px;height:25px;background:linear-gradient(90deg,#d3e3fa 0%,#bdd1f6 25%,#90b0ea 60%,#6a90de 100%);border-bottom:1px solid #2b5fc7;"></div>
<span class="t" style="left:758.59px;top:321.70px;font-size:13px;line-height:17px;letter-spacing:-0.108px;font-weight:bold;color:#5a46b4;">Connection Profile</span>
<div style="left:760px;top:349px;width:667px;height:21px;background:#fff;border:1px solid #7a7a7a;"></div>
<span class="t" style="left:763.10px;top:353.19px;font-size:11px;line-height:14px;letter-spacing:-0.105px;">Peka: workflow@PEKA</span>
<svg style="left:1412px;top:356px;" width="10" height="7" viewBox="0 0 10 7"><path d="M1 1L5 5.2L9 1" stroke="#222" stroke-width="1.6" fill="none"/></svg>
<span class="t" style="left:762.30px;top:372.99px;font-size:11px;line-height:14px;letter-spacing:-0.098px;color:#0000ff;text-decoration:underline;">Manage Connections...</span>
<div style="left:753px;top:399px;width:681px;height:108px;background:#dbe9fb;border:1px solid #2b5fc7;"></div>
<div style="left:754px;top:400px;width:679px;height:25px;background:linear-gradient(90deg,#d3e3fa 0%,#bdd1f6 25%,#90b0ea 60%,#6a90de 100%);border-bottom:1px solid #2b5fc7;"></div>
<span class="t" style="left:756.69px;top:403.70px;font-size:13px;line-height:17px;letter-spacing:0.305px;font-weight:bold;color:#5a46b4;">Entry to Wait for</span>
<svg style="left:759.2px;top:433px;" width="13" height="13" viewBox="0 0 13 13"><circle cx="6.5" cy="6.5" r="5.8" fill="#fff" stroke="#333" stroke-width="1"/></svg>
<span class="t" style="left:778.55px;top:432.89px;font-size:11px;line-height:14px;letter-spacing:-0.284px;">Starting Entry</span>
<svg style="left:759.2px;top:453px;" width="13" height="13" viewBox="0 0 13 13"><circle cx="6.5" cy="6.5" r="5.8" fill="#fff" stroke="#333" stroke-width="1"/><circle cx="6.5" cy="6.5" r="3" fill="#111"/></svg>
<span class="t" style="left:777.70px;top:452.99px;font-size:11px;line-height:14px;letter-spacing:-0.274px;">Other Entry</span>
<span class="t" style="left:846.55px;top:452.99px;font-size:11px;line-height:14px;letter-spacing:0.046px;color:#0000ff;text-decoration:underline;">Select...</span>
<span class="t" style="left:783.20px;top:470.99px;font-size:11px;line-height:14px;letter-spacing:-0.080px;">Activity:</span>
<span class="t" style="left:826.55px;top:470.99px;font-size:11px;line-height:14px;letter-spacing:-0.157px;">Send to Rental AP</span>
<span class="t" style="left:782.30px;top:486.69px;font-size:11px;line-height:14px;letter-spacing:-0.115px;">Entry:</span>
<span class="t" style="left:826.10px;top:486.69px;font-size:11px;line-height:14px;letter-spacing:-0.191px;">Routed Entry</span>
<div style="left:753px;top:513px;width:681px;height:239px;background:#dbe9fb;border:1px solid #2b5fc7;"></div>
<div style="left:754px;top:514px;width:679px;height:25px;background:#6890de;border-bottom:1px solid #2b5fc7;"></div>
<span class="t" style="left:757.50px;top:517.70px;font-size:13px;line-height:17px;letter-spacing:0.047px;font-weight:bold;color:#fff;">Wait Condition</span>
<div style="left:760px;top:545px;width:667px;height:200px;background:#dbe9fb;border:1px solid #808080;border-right-color:#fff;border-bottom-color:#fff;"></div>
<div style="left:761px;top:546px;width:665px;height:198px;border:1px solid #696969;border-right-color:#e8eef8;border-bottom-color:#e8eef8;"></div>
<span class="t" style="left:764.00px;top:549.99px;font-size:11px;line-height:14px;letter-spacing:-0.160px;">If all of these conditions are true</span>
<span class="t" style="left:784.35px;top:568.69px;font-size:11px;line-height:14px;"><span style="display:inline-block;width:314.09px;letter-spacing:-0.194px;">(Send to Rental AP::Routed Entry) : Field (Invoice Amount) equals </span><span style="display:inline-block;width:7.31px;transform:scaleX(0.729);transform-origin:0 0;">%</span><span style="display:inline-block;width:194.95px;letter-spacing:-0.302px;">(GLSumCalculation_Sum of GL Amounts)</span></span>
<span class="t" style="left:784.35px;top:587.99px;font-size:11px;line-height:14px;letter-spacing:-0.162px;">(Send to Rental AP::Routed Entry) : Field (Accounts Review) equals Approved</span>
<div style="left:0px;top:860px;width:1440px;height:40px;background:#6bc8e9;border:1px solid #504b4b;"></div>
<div style="left:51px;top:860px;width:60px;height:40px;background:#79d0eb;border:1px solid #3a4a50;box-shadow:inset 1px 1px 0 #8fdaf1;"></div>
<div style="left:299px;top:860px;width:60px;height:40px;background:#72cceb;border:1px solid #3a4a50;box-shadow:inset 1px 1px 0 #8ad8f0;"></div>
<div style="left:361px;top:860px;width:60px;height:40px;background:#a1dcf2;border:1px solid #3a4a50;box-shadow:inset 1px 1px 0 #b8e6f6;"></div>
<svg style="left:11px;top:866px;" width="28" height="27" viewBox="0 0 28 27"><path d="M0.500 4.500L11.500 2.800V12.800H0.500ZM12.800 2.600L27 0.500V12.800H12.800ZM0.500 14H11.500V24L0.500 22.300ZM12.800 14H27V26.500L12.800 24.300Z" fill="#fff"/></svg>
<svg style="left:65px;top:864px;" width="33" height="33" viewBox="0 0 33 33"><rect x="0.600" y="0.500" width="14.800" height="28.500" rx="0.800" fill="#2490da" stroke="#fff" stroke-width="1.200"/><path d="M0.600 8.300H15.400" stroke="#fff" stroke-width="1.200"/><path d="M14 18.500V17C14 16 14.600 15.500 15.500 15.500H21.500C22.400 15.500 23 16 23 17V18.500" fill="#7393a8" stroke="#fff" stroke-width="1.200"/><rect x="5.500" y="18.500" width="26" height="13.200" rx="1.600" fill="#7393a8" stroke="#fff" stroke-width="1.200"/><path d="M8 22.500H29" stroke="#fff" stroke-width="1"/><circle cx="11" cy="22.500" r="1.300" fill="#fff"/><circle cx="26" cy="22.500" r="1.300" fill="#fff"/></svg>
<svg style="left:130px;top:869px;" width="28" height="22" viewBox="0 0 28 22"><defs><linearGradient id="psh" x1="0" y1="0" x2="1" y2="1"><stop offset="0" stop-color="#3a8ad8"/><stop offset="0.500" stop-color="#1f62b8"/><stop offset="1" stop-color="#12428e"/></linearGradient></defs><path d="M6.500 0.500H25.500Q27.300 0.500 26.800 2.300L22.500 20Q22 21.500 20.500 21.500H1.800Q0 21.500 0.500 19.800L4.800 2Q5.200 0.500 6.500 0.500Z" fill="url(#psh)" stroke="#8fc0ea" stroke-width="1"/><path d="M8 4.500L16 10.500L6.500 16.500" stroke="#fff" stroke-width="2.300" fill="none"/><path d="M13.500 17H20" stroke="#fff" stroke-width="2"/></svg>
<svg style="left:189px;top:866px;" width="33" height="30" viewBox="0 0 33 30"><defs><linearGradient id="fld" x1="0" y1="0" x2="0" y2="1"><stop offset="0" stop-color="#fdf0b0"/><stop offset="1" stop-color="#efcf6a"/></linearGradient><linearGradient id="fst" x1="0" y1="0" x2="0" y2="1"><stop offset="0" stop-color="#d8eefc"/><stop offset="1" stop-color="#5aa8e0"/></linearGradient></defs><path d="M1 5.500C1 3.500 2 2.500 4 2.500H12L14 5H29C31 5 32 6 32 8V26H1Z" fill="url(#fld)" stroke="#d9b450" stroke-width="1"/><rect x="3.500" y="1.500" width="3" height="2.200" fill="#2fb02f"/><rect x="11.500" y="3" width="3" height="2.200" fill="#e02a1a"/><rect x="20" y="5" width="3" height="2.200" fill="#2a8af0"/><path d="M1 11H32" stroke="#fff6d0" stroke-width="1"/><path d="M4.500 28.500V19C4.500 17 5.500 16 7.500 16H25.500C27.500 16 28.500 17 28.500 19V28.500H22.500V22H10.500V28.500Z" fill="url(#fst)" stroke="#e8f4fc" stroke-width="0.900"/></svg>
<svg style="left:251px;top:864px;" width="33" height="32" viewBox="0 0 33 32"><defs><linearGradient id="cyl" x1="0" x2="1"><stop offset="0" stop-color="#f7d060"/><stop offset="0.500" stop-color="#e5a81a"/><stop offset="1" stop-color="#b07a08"/></linearGradient></defs><path d="M0.500 2.500V11.500C0.500 13.500 9.500 13.500 9.500 11.500V2.500Z" fill="url(#cyl)"/><ellipse cx="5" cy="2.500" rx="4.500" ry="2" fill="#fbe08a"/><path d="M14 1.500H25V8" stroke="#5a8a1a" stroke-width="1.800" stroke-dasharray="2 1.500" fill="none"/><path d="M1.500 17V24H11" stroke="#5a8a1a" stroke-width="1.800" stroke-dasharray="2 1.500" fill="none"/><path d="M13 30L24 18.500" stroke="#d9a01a" stroke-width="3"/><path d="M19.500 15L25 12.500L31.500 19L29 21.500Z" fill="#d0d4d8" stroke="#6a7078" stroke-width="0.800"/><path d="M27 30.500L16.500 19.500" stroke="#c8ccd2" stroke-width="3.200"/><path d="M11.500 15.500A3.500 3.500 0 1 0 17 21" stroke="#8a9098" stroke-width="2.400" fill="none"/></svg>
<svg style="left:313px;top:866px;" width="32" height="30" viewBox="0 0 32 30"><path d="M1 9L7.500 5.500V24L1 26.500Z" fill="#8a9098" stroke="#d9d9d9" stroke-width="0.800"/><rect x="2" y="12" width="1.600" height="1.600" fill="#4fd04f"/><path d="M7.500 3.500L29.500 1L28 21L8 23.500Z" fill="#e6e9ec" stroke="#b5bac0" stroke-width="1"/><path d="M9.500 5.500L27.500 3.300L26.300 19L10 21.300Z" fill="#eaf4fc"/><path d="M10 17L13 16.500L14.500 9L16 17L19 15.500L20.500 12L22 16L24 10L25.500 15.500" stroke="#2a7ad0" stroke-width="1.100" fill="none"/><ellipse cx="18" cy="26.500" rx="7" ry="2.800" fill="#e9e9e9" stroke="#bdbdbd" stroke-width="0.800"/><path d="M15.500 22.500H20.500V26H15.500Z" fill="#d5d5d5"/></svg>
<svg style="left:376px;top:864px;" width="30" height="31" viewBox="0 0 30 31"><path d="M12.54 0.70L17.46 0.70L17.77 4.34L20.93 5.65L23.72 3.30L27.20 6.78L24.85 9.57L26.16 12.73L29.80 13.04L29.80 17.96L26.16 18.27L24.85 21.43L27.20 24.22L23.72 27.70L20.93 25.35L17.77 26.66L17.46 30.30L12.54 30.30L12.23 26.66L9.07 25.35L6.28 27.70L2.80 24.22L5.15 21.43L3.84 18.27L0.20 17.96L0.20 13.04L3.84 12.73L5.15 9.57L2.80 6.78L6.28 3.30L9.07 5.65L12.23 4.34Z" fill="#0e4c8c" stroke="#0e4c8c" stroke-width="1" stroke-linejoin="round"/><circle cx="15" cy="15.500" r="7" fill="#fff"/><circle cx="15" cy="15.500" r="4.200" fill="none" stroke="#e0602a" stroke-width="2.400"/></svg>
<svg style="left:1270px;top:878px;" width="8" height="5" viewBox="0 0 8 5"><path d="M0 4.500H8L4 0Z" fill="#111"/></svg>
<svg style="left:1289px;top:871px;" width="19" height="18" viewBox="0 0 19 18"><rect x="1.200" y="1.200" width="2.200" height="15.400" rx="0.800" fill="#fff" stroke="#2c5868" stroke-width="0.900"/><path d="M4 2.800C6 2 8 2.200 10 3.400V8.600C8 7.600 6 7.600 4 8.400Z" fill="#fff" stroke="#2c5868" stroke-width="0.900" stroke-linejoin="round"/><path d="M10 5.200C12 6 14.500 5.800 16.500 5V9.500C14.500 10.300 12 10.300 10 9.500Z" fill="#fff" stroke="#2c5868" stroke-width="0.900" stroke-linejoin="round"/><circle cx="12.2" cy="12.1" r="4.500" fill="#e0241a" stroke="#ee6a60" stroke-width="0.600"/><path d="M9.799999999999999 9.7L14.6 14.5M14.6 9.7L9.799999999999999 14.5" stroke="#fff" stroke-width="1.600"/></svg>
<svg style="left:1313px;top:872px;" width="18" height="17" viewBox="0 0 18 17"><rect x="7.200" y="2.900" width="9" height="8.600" fill="none" stroke="#2c5868" stroke-width="2.600"/><rect x="7.200" y="2.900" width="9" height="8.600" fill="#6bc8e9" stroke="#fff" stroke-width="1.300"/><path d="M7.500 14.800H14M10.700 11.500V14.800" stroke="#2c5868" stroke-width="2.600"/><path d="M7.500 14.800H14M10.700 11.500V14.800" stroke="#fff" stroke-width="1.300"/><path d="M4.200 8V15" stroke="#2c5868" stroke-width="2.600" stroke-linecap="round"/><rect x="2" y="1.700" width="4.400" height="6" rx="1.400" fill="#6bc8e9" stroke="#2c5868" stroke-width="2.600"/><rect x="2" y="1.700" width="4.400" height="6" rx="1.400" fill="#6bc8e9" stroke="#fff" stroke-width="1.300"/><path d="M4.200 8V15" stroke="#fff" stroke-width="1.300" stroke-linecap="round"/></svg>
<svg style="left:1337px;top:871px;" width="18" height="18" viewBox="0 0 18 18"><path d="M1.800 6.500H3.200L7.500 1.800V15.800L3.200 11.500H1.800Z" fill="#fff" stroke="#2c5868" stroke-width="0.900" stroke-linejoin="round"/><circle cx="11.8" cy="12.1" r="4.500" fill="#e0241a" stroke="#ee6a60" stroke-width="0.600"/><path d="M9.4 9.7L14.200000000000001 14.5M14.200000000000001 9.7L9.4 14.5" stroke="#fff" stroke-width="1.600"/></svg>
<span class="t" style="left:1375.85px;top:864.04px;font-size:12px;line-height:16px;letter-spacing:-0.349px;">4:28 PM</span>
<span class="t" style="left:1370.85px;top:880.64px;font-size:12px;line-height:16px;letter-spacing:-0.183px;">3/21/2017</span>
<svg style="left:0;top:0" width="1440" height="900"><rect x="89.500" y="662.500" width="63" height="162" fill="#fff" stroke="#000" stroke-width="1"/><rect x="120" y="665" width="3" height="3" fill="#0a8a0a"/><rect x="120" y="821" width="3" height="3" fill="#e01a1a"/><rect x="117" y="673.0" width="9" height="2" fill="#7d7d7d"/><rect x="118.5" y="678.0" width="5.5" height="2" fill="#7d7d7d"/><rect x="116" y="682.0" width="11" height="2" fill="#7d7d7d"/><rect x="115" y="685.0" width="13" height="1" fill="#e4e4e4"/><rect x="118" y="688.65" width="7" height="0.7" fill="#7d7d7d"/><rect x="116" y="691.65" width="11" height="0.7" fill="#7d7d7d"/><rect x="116" y="696.0" width="11" height="2" fill="#7d7d7d"/><rect x="115" y="699.0" width="13" height="1" fill="#e4e4e4"/><rect x="118.5" y="704.2" width="5.5" height="1.6" fill="#7d7d7d"/><rect x="118" y="709.15" width="7" height="0.7" fill="#7d7d7d"/><rect x="117" y="712.15" width="8" height="0.7" fill="#7d7d7d"/><rect x="111" y="716.65" width="9" height="0.7" fill="#7d7d7d"/><rect x="112" y="719.15" width="7" height="0.7" fill="#7d7d7d"/><rect x="112" y="723.0" width="8" height="2" fill="#7d7d7d"/><rect x="111" y="728.0" width="9" height="2" fill="#7d7d7d"/><rect x="112" y="733.15" width="6" height="0.7" fill="#7d7d7d"/><rect x="110" y="738.15" width="10" height="0.7" fill="#7d7d7d"/><rect x="104" y="742.0" width="6" height="2" fill="#7d7d7d"/><rect x="118" y="742.0" width="7" height="2" fill="#7d7d7d"/><rect x="114" y="745.0" width="13" height="1" fill="#e4e4e4"/><rect x="119" y="748.15" width="4" height="0.7" fill="#7d7d7d"/><rect x="112" y="753.1" width="7" height="1.8" fill="#7d7d7d"/><rect x="109" y="757.65" width="12" height="0.7" fill="#7d7d7d"/><rect x="104" y="762.15" width="12" height="0.7" fill="#7d7d7d"/><rect x="140" y="762.15" width="9" height="0.7" fill="#7d7d7d"/><rect x="106" y="765.0" width="7" height="2" fill="#7d7d7d"/><rect x="141" y="765.0" width="7" height="2" fill="#7d7d7d"/><rect x="106" y="769.0" width="6" height="2" fill="#7d7d7d"/><rect x="141" y="770.0" width="7" height="2" fill="#7d7d7d"/><rect x="107" y="774.0" width="6" height="2" fill="#7d7d7d"/><rect x="102" y="778.15" width="15" height="0.7" fill="#7d7d7d"/><rect x="126" y="783.65" width="9" height="0.7" fill="#7d7d7d"/><rect x="111" y="785.1" width="7" height="1.8" fill="#7d7d7d"/><rect x="97" y="786.1" width="7" height="1.8" fill="#7d7d7d"/><rect x="127" y="787.1" width="7" height="1.8" fill="#7d7d7d"/><rect x="109" y="790.0" width="11" height="2" fill="#7d7d7d"/><rect x="127" y="792.0" width="8" height="2" fill="#7d7d7d"/><rect x="108" y="794.0" width="13" height="2" fill="#7d7d7d"/><rect x="106" y="801.15" width="8" height="0.7" fill="#7d7d7d"/><rect x="106" y="804.1" width="8" height="1.8" fill="#7d7d7d"/><rect x="107" y="809.1" width="6" height="1.8" fill="#7d7d7d"/><rect x="106" y="813.1" width="7" height="1.8" fill="#7d7d7d"/><path d="M121.500 668V716M116 716V760M110 760V782M113 782V820" stroke="#b8b8b8" stroke-width="0.500" fill="none"/><path d="M121.500 715.500H144.500V819.500H111" stroke="#a5a5a5" stroke-width="0.800" stroke-dasharray="1 1.500" fill="none"/><path d="M116 760.500H131.500V818" stroke="#a5a5a5" stroke-width="0.800" stroke-dasharray="1 1.500" fill="none"/><path d="M114.500 691H130.500V702H114.500Z" stroke="#a5a5a5" stroke-width="0.800" stroke-dasharray="1 1.500" fill="none"/><path d="M101.500 781H115V799H101.500Z" stroke="#a5a5a5" stroke-width="0.800" stroke-dasharray="1 1.500" fill="none"/><path d="M107.500 741H122V751H107.500" stroke="#a5a5a5" stroke-width="0.800" stroke-dasharray="1 1.500" fill="none"/><rect x="89.500" y="772.500" width="36" height="54" fill="none" stroke="#0000ff" stroke-width="1"/></svg>
</body></html>
